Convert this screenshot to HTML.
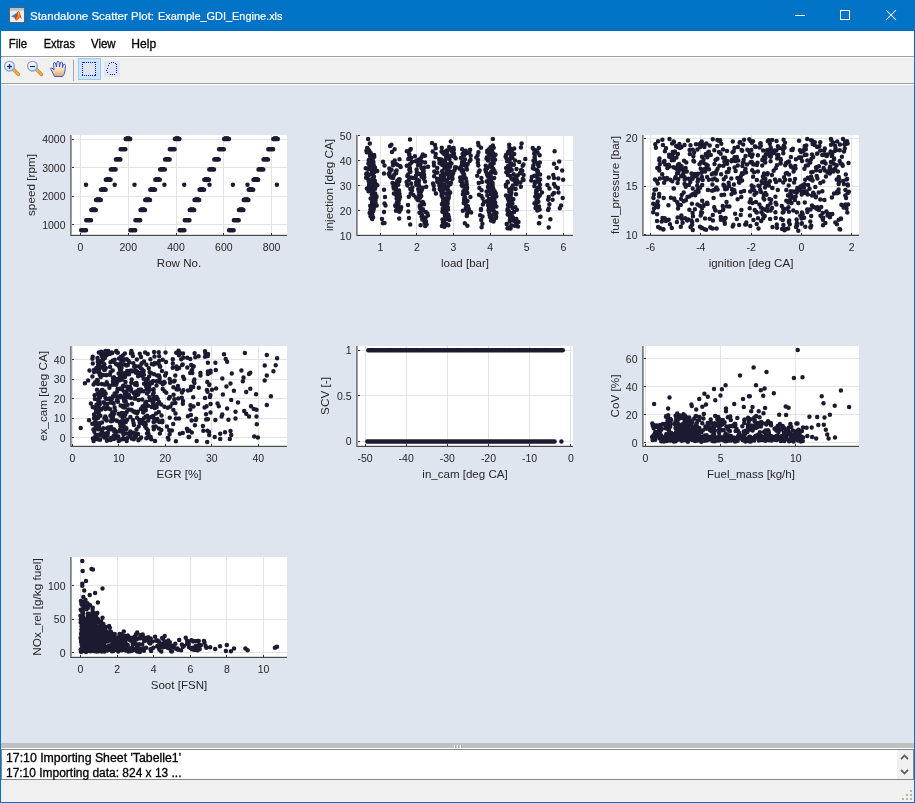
<!DOCTYPE html>
<html><head><meta charset="utf-8">
<style>
html,body{margin:0;padding:0;width:915px;height:803px;overflow:hidden;background:#0173c7;}
svg{position:absolute;left:0;top:0;will-change:transform;}
text{font-family:"Liberation Sans",sans-serif;}
</style></head><body>
<svg width="915" height="803" viewBox="0 0 915 803">
<defs>
<radialGradient id="lens" cx="0.4" cy="0.35" r="0.7"><stop offset="0" stop-color="#ffffff"/><stop offset="0.6" stop-color="#d8f2f6"/><stop offset="1" stop-color="#a8dde8"/></radialGradient>
<linearGradient id="skin" x1="0" y1="0" x2="0" y2="1"><stop offset="0" stop-color="#fdf0e2"/><stop offset="0.6" stop-color="#f6d9bb"/><stop offset="1" stop-color="#d9a070"/></linearGradient>
</defs>
<!-- window frame -->
<rect x="0" y="0" width="915" height="803" fill="#0173c7"/>
<!-- title icon -->
<rect x="9.5" y="7.5" width="15" height="15" fill="#eeeeee" stroke="#56606c"/>
<rect x="10" y="8" width="14" height="1.6" fill="#a9c8e6"/>
<rect x="10" y="9.6" width="14" height="0.8" fill="#9aa4ae"/>
<path d="M11.1 16.4 L17.1 12.6 L15.3 18.1 Z" fill="#3584c8"/>
<path d="M14.6 17.9 L17.2 12.5 L18.3 10.8 L19.5 12.2 L21.9 18.9 L20 16.9 L16.3 20.7 Z" fill="#c43617"/>
<path d="M15.8 19.6 L17.9 13.2 L18.6 11.6 L19.6 14.2 L20.3 16.9 L16.3 20.7 Z" fill="#ef7d21"/>
<path d="M18.1 12.6 L18.6 11.4 L19.3 13.6 L18.7 16.2 Z" fill="#f8d13a"/>
<text x="30" y="20" font-size="11.5" fill="#fff" stroke="#fff" stroke-width="0.2">Standalone Scatter Plot: </text>
<text x="158" y="20" font-size="11.5" fill="#fff" stroke="#fff" stroke-width="0.2" textLength="124.5" lengthAdjust="spacingAndGlyphs">Example_GDI_Engine.xls</text>
<path d="M795 15.5H805" stroke="#fff" stroke-width="1"/>
<rect x="840.5" y="10.5" width="9" height="9" fill="none" stroke="#fff" stroke-width="1"/>
<path d="M886 10L896 20M896 10L886 20" stroke="#fff" stroke-width="1.05"/>
<!-- menu -->
<rect x="1" y="31" width="913" height="25" fill="#fff"/>
<text x="8.7" y="47.6" font-size="12" fill="#000" stroke="#000" stroke-width="0.3" textLength="18.4" lengthAdjust="spacingAndGlyphs">File</text>
<text x="43.7" y="47.6" font-size="12" fill="#000" stroke="#000" stroke-width="0.3" textLength="31.2" lengthAdjust="spacingAndGlyphs">Extras</text>
<text x="90.9" y="47.6" font-size="12" fill="#000" stroke="#000" stroke-width="0.3" textLength="24.8" lengthAdjust="spacingAndGlyphs">View</text>
<text x="131.3" y="47.6" font-size="12" fill="#000" stroke="#000" stroke-width="0.3" textLength="24.9" lengthAdjust="spacingAndGlyphs">Help</text>
<rect x="1" y="56" width="913" height="1" fill="#a0a0a0"/>
<rect x="1" y="57" width="913" height="1" fill="#fff"/>
<rect x="1" y="58" width="913" height="25" fill="#f0f0f0"/>
<rect x="1" y="83" width="913" height="1" fill="#a0a0a0"/>
<rect x="1" y="84" width="913" height="1" fill="#fff"/>
<!-- toolbar icons -->
<g>
<path d="M13.5 69.5L18.5 74.5" stroke="#c08030" stroke-width="3.2" stroke-linecap="round"/>
<path d="M13.5 69.5L18.5 74.5" stroke="#f5ae45" stroke-width="2" stroke-linecap="round"/>
<circle cx="9.5" cy="66.2" r="4.9" fill="url(#lens)" stroke="#8a8ee0" stroke-width="1.1"/>
<path d="M7 66.5H12M9.5 64V69" stroke="#24336e" stroke-width="1.3"/>
<path d="M36.5 69.5L41.5 74.5" stroke="#c08030" stroke-width="3.2" stroke-linecap="round"/>
<path d="M36.5 69.5L41.5 74.5" stroke="#f5ae45" stroke-width="2" stroke-linecap="round"/>
<circle cx="32.5" cy="66.2" r="4.9" fill="url(#lens)" stroke="#8a8ee0" stroke-width="1.1"/>
<path d="M30 66.5H35" stroke="#24336e" stroke-width="1.3"/>
<path d="M54.5 76.5 L51 69.5 Q50 67.5 52 68 L54 70 L53.5 63.5 Q54 61.5 55.5 63 L56.5 67 L57 62 Q58 60.5 59.2 62 L59.5 67 L60.5 62.5 Q61.5 61 62.5 63 L62.5 67.5 L63.5 64.5 Q65 63.5 65.5 65.5 L65 71 Q64.5 74.5 62.5 76.5 Z" fill="url(#skin)" stroke="#2e4fc4" stroke-width="0.9"/>
<rect x="73" y="60" width="1" height="21" fill="#a7a7a7"/>
<rect x="78.5" y="58.5" width="22" height="21" fill="#cce4f7" stroke="#99c9ef"/>
<rect x="83" y="63" width="12" height="12" fill="#dde5f0"/>
<path d="M82 62h1v1h-1zM82 75h1v1h-1zM84 62h1v1h-1zM84 75h1v1h-1zM86 62h1v1h-1zM86 75h1v1h-1zM88 62h1v1h-1zM88 75h1v1h-1zM90 62h1v1h-1zM90 75h1v1h-1zM92 62h1v1h-1zM92 75h1v1h-1zM94 62h1v1h-1zM94 75h1v1h-1zM82 62h1v1h-1zM95 62h1v1h-1zM82 64h1v1h-1zM95 64h1v1h-1zM82 66h1v1h-1zM95 66h1v1h-1zM82 68h1v1h-1zM95 68h1v1h-1zM82 70h1v1h-1zM95 70h1v1h-1zM82 72h1v1h-1zM95 72h1v1h-1zM82 74h1v1h-1zM95 74h1v1h-1zM95 62h1v1h-1zM82 75h1v1h-1zM95 75h1v1h-1zM83 62h1v1h-1zM94 75h1v1h-1z" fill="#0a14f0"/>
<rect x="104" y="61" width="16" height="16" fill="#e0e5ee"/>
<ellipse cx="111.5" cy="68.5" rx="4.5" ry="5.5" fill="#dde5f0"/><path d="M107 68h1v1h-1zM108 65h1v1h-1zM109 63h1v1h-1zM111 62h1v1h-1zM113 62h1v1h-1zM115 63h1v1h-1zM116 64h1v1h-1zM116 66h1v1h-1zM116 68h1v1h-1zM116 70h1v1h-1zM116 72h1v1h-1zM114 74h1v1h-1zM112 74h1v1h-1zM110 74h1v1h-1zM107 72h1v1h-1zM106 70h1v1h-1z" fill="#0a14f0"/>
</g>
<!-- figure -->
<rect x="1" y="85" width="913" height="658" fill="#dfe5ef"/>
<rect x="72" y="135" width="215" height="100" fill="#fff"/>
<path d="M80.5 135V235M128.5 135V235M176.5 135V235M223.5 135V235M271.5 135V235M72 224.5H287M72 196.5H287M72 167.5H287M72 139.5H287" stroke="#e3e3e3" stroke-width="1" fill="none"/>
<path d="M81.2 230.3h0M81.5 230.3h0M81.7 230.3h0M81.9 230.3h0M82.2 230.3h0M82.4 230.3h0M82.7 230.3h0M82.9 230.3h0M83.1 230.3h0M83.4 230.3h0M83.6 230.3h0M83.8 230.3h0M84.1 230.3h0M84.3 230.3h0M84.6 230.3h0M84.8 230.3h0M85.0 230.3h0M85.3 230.3h0M85.5 230.3h0M85.8 230.3h0M86.0 230.3h0M86.2 220.2h0M86.5 220.2h0M86.7 220.2h0M87.0 220.2h0M87.2 220.2h0M87.4 220.2h0M87.7 220.2h0M87.9 220.2h0M88.1 220.2h0M88.4 220.2h0M88.6 220.2h0M88.9 220.2h0M89.1 220.2h0M89.3 220.2h0M89.6 220.2h0M89.8 220.2h0M90.1 220.2h0M90.3 220.2h0M90.5 220.2h0M90.8 220.2h0M91.0 220.2h0M91.3 210.0h0M91.5 210.0h0M91.7 210.0h0M92.0 210.0h0M92.2 210.0h0M92.4 210.0h0M92.7 210.0h0M92.9 210.0h0M93.2 210.0h0M93.4 210.0h0M93.6 210.0h0M93.9 210.0h0M94.1 210.0h0M94.4 210.0h0M94.6 210.0h0M94.8 210.0h0M95.1 210.0h0M95.3 210.0h0M95.6 210.0h0M95.8 210.0h0M96.0 199.9h0M96.3 199.9h0M96.5 199.9h0M96.7 199.9h0M97.0 199.9h0M97.2 199.9h0M97.5 199.9h0M97.7 199.9h0M97.9 199.9h0M98.2 199.9h0M98.4 199.9h0M98.7 199.9h0M98.9 199.9h0M99.1 199.9h0M99.4 199.9h0M99.6 199.9h0M99.9 199.9h0M100.1 199.9h0M100.3 199.9h0M100.6 199.9h0M100.8 199.9h0M101.0 189.8h0M101.3 189.8h0M101.5 189.8h0M101.8 189.8h0M102.0 189.8h0M102.2 189.8h0M102.5 189.8h0M102.7 189.8h0M103.0 189.8h0M103.2 189.8h0M103.4 189.8h0M103.7 189.8h0M103.9 189.8h0M104.2 189.8h0M104.4 189.8h0M104.6 189.8h0M104.9 189.8h0M105.1 189.8h0M105.3 189.8h0M105.6 189.8h0M105.8 179.7h0M106.1 179.7h0M106.3 179.7h0M106.5 179.7h0M106.8 179.7h0M107.0 179.7h0M107.3 179.7h0M107.5 179.7h0M107.7 179.7h0M108.0 179.7h0M108.2 179.7h0M108.5 179.7h0M108.7 179.7h0M108.9 179.7h0M109.2 179.7h0M109.4 179.7h0M109.6 179.7h0M109.9 179.7h0M110.1 179.7h0M110.4 179.7h0M110.6 179.7h0M110.8 169.5h0M111.1 169.5h0M111.3 169.5h0M111.6 169.5h0M111.8 169.5h0M112.0 169.5h0M112.3 169.5h0M112.5 169.5h0M112.8 169.5h0M113.0 169.5h0M113.2 169.5h0M113.5 169.5h0M113.7 169.5h0M113.9 169.5h0M114.2 169.5h0M114.4 169.5h0M114.7 169.5h0M114.9 169.5h0M115.1 169.5h0M115.4 169.5h0M115.6 169.5h0M115.9 159.4h0M116.1 159.4h0M116.3 159.4h0M116.6 159.4h0M116.8 159.4h0M117.1 159.4h0M117.3 159.4h0M117.5 159.4h0M117.8 159.4h0M118.0 159.4h0M118.2 159.4h0M118.5 159.4h0M118.7 159.4h0M119.0 159.4h0M119.2 159.4h0M119.4 159.4h0M119.7 159.4h0M119.9 159.4h0M120.2 159.4h0M120.4 159.4h0M120.6 149.3h0M120.9 149.3h0M121.1 149.3h0M121.4 149.3h0M121.6 149.3h0M121.8 149.3h0M122.1 149.3h0M122.3 149.3h0M122.5 149.3h0M122.8 149.3h0M123.0 149.3h0M123.3 149.3h0M123.5 149.3h0M123.7 149.3h0M124.0 149.3h0M124.2 149.3h0M124.5 149.3h0M124.7 149.3h0M124.9 149.3h0M125.2 149.3h0M125.4 149.3h0M125.7 139.1h0M125.9 139.1h0M126.1 139.1h0M126.4 139.1h0M126.6 139.1h0M126.8 139.1h0M127.1 139.1h0M127.3 139.1h0M127.6 139.1h0M127.8 139.1h0M128.0 139.1h0M128.3 139.1h0M128.5 139.1h0M128.8 139.1h0M129.0 139.1h0M129.2 139.1h0M129.5 139.1h0M129.7 139.1h0M130.0 139.1h0M130.2 139.1h0M130.4 230.3h0M130.7 230.3h0M130.9 230.3h0M131.1 230.3h0M131.4 230.3h0M131.6 230.3h0M131.9 230.3h0M132.1 230.3h0M132.3 230.3h0M132.6 230.3h0M132.8 230.3h0M133.1 230.3h0M133.3 230.3h0M133.5 230.3h0M133.8 230.3h0M134.0 230.3h0M134.3 230.3h0M134.5 230.3h0M134.7 230.3h0M135.0 230.3h0M135.2 230.3h0M135.4 220.2h0M135.7 220.2h0M135.9 220.2h0M136.2 220.2h0M136.4 220.2h0M136.6 220.2h0M136.9 220.2h0M137.1 220.2h0M137.4 220.2h0M137.6 220.2h0M137.8 220.2h0M138.1 220.2h0M138.3 220.2h0M138.6 220.2h0M138.8 220.2h0M139.0 220.2h0M139.3 220.2h0M139.5 220.2h0M139.7 220.2h0M140.0 220.2h0M140.2 220.2h0M140.5 210.0h0M140.7 210.0h0M140.9 210.0h0M141.2 210.0h0M141.4 210.0h0M141.7 210.0h0M141.9 210.0h0M142.1 210.0h0M142.4 210.0h0M142.6 210.0h0M142.9 210.0h0M143.1 210.0h0M143.3 210.0h0M143.6 210.0h0M143.8 210.0h0M144.0 210.0h0M144.3 210.0h0M144.5 210.0h0M144.8 210.0h0M145.0 210.0h0M145.2 199.9h0M145.5 199.9h0M145.7 199.9h0M146.0 199.9h0M146.2 199.9h0M146.4 199.9h0M146.7 199.9h0M146.9 199.9h0M147.2 199.9h0M147.4 199.9h0M147.6 199.9h0M147.9 199.9h0M148.1 199.9h0M148.3 199.9h0M148.6 199.9h0M148.8 199.9h0M149.1 199.9h0M149.3 199.9h0M149.5 199.9h0M149.8 199.9h0M150.0 199.9h0M150.3 189.8h0M150.5 189.8h0M150.7 189.8h0M151.0 189.8h0M151.2 189.8h0M151.5 189.8h0M151.7 189.8h0M151.9 189.8h0M152.2 189.8h0M152.4 189.8h0M152.6 189.8h0M152.9 189.8h0M153.1 189.8h0M153.4 189.8h0M153.6 189.8h0M153.8 189.8h0M154.1 189.8h0M154.3 189.8h0M154.6 189.8h0M154.8 189.8h0M155.0 189.8h0M155.3 179.7h0M155.5 179.7h0M155.8 179.7h0M156.0 179.7h0M156.2 179.7h0M156.5 179.7h0M156.7 179.7h0M156.9 179.7h0M157.2 179.7h0M157.4 179.7h0M157.7 179.7h0M157.9 179.7h0M158.1 179.7h0M158.4 179.7h0M158.6 179.7h0M158.9 179.7h0M159.1 179.7h0M159.3 179.7h0M159.6 179.7h0M159.8 179.7h0M160.1 169.5h0M160.3 169.5h0M160.5 169.5h0M160.8 169.5h0M161.0 169.5h0M161.2 169.5h0M161.5 169.5h0M161.7 169.5h0M162.0 169.5h0M162.2 169.5h0M162.4 169.5h0M162.7 169.5h0M162.9 169.5h0M163.2 169.5h0M163.4 169.5h0M163.6 169.5h0M163.9 169.5h0M164.1 169.5h0M164.4 169.5h0M164.6 169.5h0M164.8 169.5h0M165.1 159.4h0M165.3 159.4h0M165.5 159.4h0M165.8 159.4h0M166.0 159.4h0M166.3 159.4h0M166.5 159.4h0M166.7 159.4h0M167.0 159.4h0M167.2 159.4h0M167.5 159.4h0M167.7 159.4h0M167.9 159.4h0M168.2 159.4h0M168.4 159.4h0M168.7 159.4h0M168.9 159.4h0M169.1 159.4h0M169.4 159.4h0M169.6 159.4h0M169.8 149.3h0M170.1 149.3h0M170.3 149.3h0M170.6 149.3h0M170.8 149.3h0M171.0 149.3h0M171.3 149.3h0M171.5 149.3h0M171.8 149.3h0M172.0 149.3h0M172.2 149.3h0M172.5 149.3h0M172.7 149.3h0M173.0 149.3h0M173.2 149.3h0M173.4 149.3h0M173.7 149.3h0M173.9 149.3h0M174.1 149.3h0M174.4 149.3h0M174.6 149.3h0M174.9 139.1h0M175.1 139.1h0M175.3 139.1h0M175.6 139.1h0M175.8 139.1h0M176.1 139.1h0M176.3 139.1h0M176.5 139.1h0M176.8 139.1h0M177.0 139.1h0M177.3 139.1h0M177.5 139.1h0M177.7 139.1h0M178.0 139.1h0M178.2 139.1h0M178.4 139.1h0M178.7 139.1h0M178.9 139.1h0M179.2 139.1h0M179.4 139.1h0M179.6 230.3h0M179.9 230.3h0M180.1 230.3h0M180.4 230.3h0M180.6 230.3h0M180.8 230.3h0M181.1 230.3h0M181.3 230.3h0M181.6 230.3h0M181.8 230.3h0M182.0 230.3h0M182.3 230.3h0M182.5 230.3h0M182.7 230.3h0M183.0 230.3h0M183.2 230.3h0M183.5 230.3h0M183.7 230.3h0M183.9 230.3h0M184.2 230.3h0M184.4 230.3h0M184.7 220.2h0M184.9 220.2h0M185.1 220.2h0M185.4 220.2h0M185.6 220.2h0M185.9 220.2h0M186.1 220.2h0M186.3 220.2h0M186.6 220.2h0M186.8 220.2h0M187.0 220.2h0M187.3 220.2h0M187.5 220.2h0M187.8 220.2h0M188.0 220.2h0M188.2 220.2h0M188.5 220.2h0M188.7 220.2h0M189.0 220.2h0M189.2 220.2h0M189.4 220.2h0M189.7 210.0h0M189.9 210.0h0M190.2 210.0h0M190.4 210.0h0M190.6 210.0h0M190.9 210.0h0M191.1 210.0h0M191.3 210.0h0M191.6 210.0h0M191.8 210.0h0M192.1 210.0h0M192.3 210.0h0M192.5 210.0h0M192.8 210.0h0M193.0 210.0h0M193.3 210.0h0M193.5 210.0h0M193.7 210.0h0M194.0 210.0h0M194.2 210.0h0M194.5 199.9h0M194.7 199.9h0M194.9 199.9h0M195.2 199.9h0M195.4 199.9h0M195.6 199.9h0M195.9 199.9h0M196.1 199.9h0M196.4 199.9h0M196.6 199.9h0M196.8 199.9h0M197.1 199.9h0M197.3 199.9h0M197.6 199.9h0M197.8 199.9h0M198.0 199.9h0M198.3 199.9h0M198.5 199.9h0M198.8 199.9h0M199.0 199.9h0M199.2 199.9h0M199.5 189.8h0M199.7 189.8h0M199.9 189.8h0M200.2 189.8h0M200.4 189.8h0M200.7 189.8h0M200.9 189.8h0M201.1 189.8h0M201.4 189.8h0M201.6 189.8h0M201.9 189.8h0M202.1 189.8h0M202.3 189.8h0M202.6 189.8h0M202.8 189.8h0M203.1 189.8h0M203.3 189.8h0M203.5 189.8h0M203.8 189.8h0M204.0 189.8h0M204.3 179.7h0M204.5 179.7h0M204.7 179.7h0M205.0 179.7h0M205.2 179.7h0M205.4 179.7h0M205.7 179.7h0M205.9 179.7h0M206.2 179.7h0M206.4 179.7h0M206.6 179.7h0M206.9 179.7h0M207.1 179.7h0M207.4 179.7h0M207.6 179.7h0M207.8 179.7h0M208.1 179.7h0M208.3 179.7h0M208.6 179.7h0M208.8 179.7h0M209.0 179.7h0M209.3 169.5h0M209.5 169.5h0M209.7 169.5h0M210.0 169.5h0M210.2 169.5h0M210.5 169.5h0M210.7 169.5h0M210.9 169.5h0M211.2 169.5h0M211.4 169.5h0M211.7 169.5h0M211.9 169.5h0M212.1 169.5h0M212.4 169.5h0M212.6 169.5h0M212.9 169.5h0M213.1 169.5h0M213.3 169.5h0M213.6 169.5h0M213.8 169.5h0M214.0 169.5h0M214.3 159.4h0M214.5 159.4h0M214.8 159.4h0M215.0 159.4h0M215.2 159.4h0M215.5 159.4h0M215.7 159.4h0M216.0 159.4h0M216.2 159.4h0M216.4 159.4h0M216.7 159.4h0M216.9 159.4h0M217.2 159.4h0M217.4 159.4h0M217.6 159.4h0M217.9 159.4h0M218.1 159.4h0M218.3 159.4h0M218.6 159.4h0M218.8 159.4h0M219.1 149.3h0M219.3 149.3h0M219.5 149.3h0M219.8 149.3h0M220.0 149.3h0M220.3 149.3h0M220.5 149.3h0M220.7 149.3h0M221.0 149.3h0M221.2 149.3h0M221.5 149.3h0M221.7 149.3h0M221.9 149.3h0M222.2 149.3h0M222.4 149.3h0M222.6 149.3h0M222.9 149.3h0M223.1 149.3h0M223.4 149.3h0M223.6 149.3h0M223.8 149.3h0M224.1 139.1h0M224.3 139.1h0M224.6 139.1h0M224.8 139.1h0M225.0 139.1h0M225.3 139.1h0M225.5 139.1h0M225.8 139.1h0M226.0 139.1h0M226.2 139.1h0M226.5 139.1h0M226.7 139.1h0M226.9 139.1h0M227.2 139.1h0M227.4 139.1h0M227.7 139.1h0M227.9 139.1h0M228.1 139.1h0M228.4 139.1h0M228.6 139.1h0M228.9 139.1h0M229.1 230.3h0M229.3 230.3h0M229.6 230.3h0M229.8 230.3h0M230.1 230.3h0M230.3 230.3h0M230.5 230.3h0M230.8 230.3h0M231.0 230.3h0M231.2 230.3h0M231.5 230.3h0M231.7 230.3h0M232.0 230.3h0M232.2 230.3h0M232.4 230.3h0M232.7 230.3h0M232.9 230.3h0M233.2 230.3h0M233.4 230.3h0M233.6 230.3h0M233.9 220.2h0M234.1 220.2h0M234.4 220.2h0M234.6 220.2h0M234.8 220.2h0M235.1 220.2h0M235.3 220.2h0M235.5 220.2h0M235.8 220.2h0M236.0 220.2h0M236.3 220.2h0M236.5 220.2h0M236.7 220.2h0M237.0 220.2h0M237.2 220.2h0M237.5 220.2h0M237.7 220.2h0M237.9 220.2h0M238.2 220.2h0M238.4 220.2h0M238.7 220.2h0M238.9 210.0h0M239.1 210.0h0M239.4 210.0h0M239.6 210.0h0M239.8 210.0h0M240.1 210.0h0M240.3 210.0h0M240.6 210.0h0M240.8 210.0h0M241.0 210.0h0M241.3 210.0h0M241.5 210.0h0M241.8 210.0h0M242.0 210.0h0M242.2 210.0h0M242.5 210.0h0M242.7 210.0h0M243.0 210.0h0M243.2 210.0h0M243.4 210.0h0M243.7 199.9h0M243.9 199.9h0M244.1 199.9h0M244.4 199.9h0M244.6 199.9h0M244.9 199.9h0M245.1 199.9h0M245.3 199.9h0M245.6 199.9h0M245.8 199.9h0M246.1 199.9h0M246.3 199.9h0M246.5 199.9h0M246.8 199.9h0M247.0 199.9h0M247.3 199.9h0M247.5 199.9h0M247.7 199.9h0M248.0 199.9h0M248.2 199.9h0M248.4 199.9h0M248.7 189.8h0M248.9 189.8h0M249.2 189.8h0M249.4 189.8h0M249.6 189.8h0M249.9 189.8h0M250.1 189.8h0M250.4 189.8h0M250.6 189.8h0M250.8 189.8h0M251.1 189.8h0M251.3 189.8h0M251.6 189.8h0M251.8 189.8h0M252.0 189.8h0M252.3 189.8h0M252.5 189.8h0M252.7 189.8h0M253.0 189.8h0M253.2 189.8h0M253.5 179.7h0M253.7 179.7h0M253.9 179.7h0M254.2 179.7h0M254.4 179.7h0M254.7 179.7h0M254.9 179.7h0M255.1 179.7h0M255.4 179.7h0M255.6 179.7h0M255.9 179.7h0M256.1 179.7h0M256.3 179.7h0M256.6 179.7h0M256.8 179.7h0M257.0 179.7h0M257.3 179.7h0M257.5 179.7h0M257.8 179.7h0M258.0 179.7h0M258.2 179.7h0M258.5 169.5h0M258.7 169.5h0M259.0 169.5h0M259.2 169.5h0M259.4 169.5h0M259.7 169.5h0M259.9 169.5h0M260.2 169.5h0M260.4 169.5h0M260.6 169.5h0M260.9 169.5h0M261.1 169.5h0M261.3 169.5h0M261.6 169.5h0M261.8 169.5h0M262.1 169.5h0M262.3 169.5h0M262.5 169.5h0M262.8 169.5h0M263.0 169.5h0M263.3 169.5h0M263.5 159.4h0M263.7 159.4h0M264.0 159.4h0M264.2 159.4h0M264.5 159.4h0M264.7 159.4h0M264.9 159.4h0M265.2 159.4h0M265.4 159.4h0M265.6 159.4h0M265.9 159.4h0M266.1 159.4h0M266.4 159.4h0M266.6 159.4h0M266.8 159.4h0M267.1 159.4h0M267.3 159.4h0M267.6 159.4h0M267.8 159.4h0M268.0 159.4h0M268.3 149.3h0M268.5 149.3h0M268.8 149.3h0M269.0 149.3h0M269.2 149.3h0M269.5 149.3h0M269.7 149.3h0M269.9 149.3h0M270.2 149.3h0M270.4 149.3h0M270.7 149.3h0M270.9 149.3h0M271.1 149.3h0M271.4 149.3h0M271.6 149.3h0M271.9 149.3h0M272.1 149.3h0M272.3 149.3h0M272.6 149.3h0M272.8 149.3h0M273.1 149.3h0M273.3 139.1h0M273.5 139.1h0M273.8 139.1h0M274.0 139.1h0M274.2 139.1h0M274.5 139.1h0M274.7 139.1h0M275.0 139.1h0M275.2 139.1h0M275.4 139.1h0M275.7 139.1h0M275.9 139.1h0M276.2 139.1h0M276.4 139.1h0M276.6 139.1h0M276.9 139.1h0M277.1 139.1h0M277.4 139.1h0M277.6 139.1h0M277.8 139.1h0M86.0 184.7h0M114.7 184.7h0M134.5 184.7h0M164.4 184.7h0M184.2 184.7h0M209.5 184.7h0M232.9 184.7h0M247.5 184.7h0M276.9 184.7h0" stroke="#1a1a30" stroke-width="4.5" stroke-linecap="round" fill="none"/>
<rect x="70" y="135" width="1" height="101" fill="#777c82"/>
<rect x="71" y="135" width="1" height="100" fill="#a0a0a0"/>
<rect x="72" y="234" width="215" height="1" fill="#000" fill-opacity="0.15"/>
<rect x="71" y="235" width="216" height="1" fill="#4a4a4a"/>
<path d="M80.5 235v-2M128.5 235v-2M176.5 235v-2M223.5 235v-2M271.5 235v-2M72 224.5h2M72 196.5h2M72 167.5h2M72 139.5h2" stroke="#333" stroke-width="1" fill="none"/>
<text x="80.5" y="250.5" text-anchor="middle" font-size="10.5" fill="#262626">0</text>
<text x="128.28" y="250.5" text-anchor="middle" font-size="10.5" fill="#262626">200</text>
<text x="176.06" y="250.5" text-anchor="middle" font-size="10.5" fill="#262626">400</text>
<text x="223.84" y="250.5" text-anchor="middle" font-size="10.5" fill="#262626">600</text>
<text x="271.62" y="250.5" text-anchor="middle" font-size="10.5" fill="#262626">800</text>
<text x="65.5" y="228.6" text-anchor="end" font-size="10.5" fill="#262626">1000</text>
<text x="65.5" y="200.12" text-anchor="end" font-size="10.5" fill="#262626">2000</text>
<text x="65.5" y="171.64" text-anchor="end" font-size="10.5" fill="#262626">3000</text>
<text x="65.5" y="143.16" text-anchor="end" font-size="10.5" fill="#262626">4000</text>
<text x="179.0" y="266.5" text-anchor="middle" font-size="11.55" fill="#262626">Row No.</text>
<text transform="translate(35,185.0) rotate(-90)" text-anchor="middle" font-size="11.75" fill="#262626">speed [rpm]</text>
<rect x="358" y="135" width="215" height="100" fill="#fff"/>
<path d="M380.5 135V235M416.5 135V235M453.5 135V235M490.5 135V235M526.5 135V235M563.5 135V235M358 235.5H573M358 210.5H573M358 185.5H573M358 160.5H573M358 135.5H573" stroke="#e3e3e3" stroke-width="1" fill="none"/>
<path d="M370.0 212.6h0M368.7 160.3h0M373.8 208.8h0M373.1 217.2h0M371.8 218.4h0M372.9 179.1h0M371.3 215.5h0M374.0 194.0h0M371.0 163.0h0M371.5 216.9h0M372.2 178.8h0M370.6 214.0h0M372.8 155.6h0M371.9 211.5h0M371.5 187.1h0M369.1 184.1h0M369.8 164.5h0M374.9 167.6h0M372.4 169.5h0M372.2 214.4h0M372.2 219.0h0M370.1 156.1h0M371.5 170.0h0M371.4 192.1h0M372.1 215.3h0M373.2 207.4h0M377.3 185.2h0M372.5 208.6h0M374.3 156.7h0M375.1 188.8h0M376.5 196.3h0M366.4 150.8h0M370.5 216.2h0M374.8 180.7h0M374.0 206.7h0M369.1 185.8h0M375.2 193.5h0M370.7 167.4h0M373.5 198.0h0M370.2 205.8h0M372.7 174.4h0M372.9 158.4h0M376.4 184.5h0M369.4 159.7h0M369.5 166.2h0M373.7 197.3h0M369.5 161.7h0M369.5 152.1h0M370.0 160.9h0M366.9 188.4h0M368.0 189.4h0M372.7 204.8h0M372.3 203.3h0M366.2 174.0h0M373.7 165.0h0M370.7 166.0h0M377.2 171.1h0M373.3 210.9h0M373.5 195.5h0M370.2 153.5h0M374.9 187.7h0M371.7 172.5h0M376.5 197.1h0M372.9 202.6h0M367.8 149.0h0M370.6 198.6h0M375.2 183.2h0M367.6 177.3h0M372.5 210.4h0M367.2 148.1h0M373.9 176.5h0M374.1 155.1h0M373.1 194.8h0M367.1 173.2h0M369.5 151.6h0M373.7 186.3h0M371.2 190.3h0M368.4 163.6h0M375.6 200.0h0M373.3 192.4h0M370.7 153.0h0M370.5 209.5h0M372.8 157.7h0M372.6 199.2h0M368.6 181.1h0M368.5 191.3h0M370.0 154.6h0M369.1 150.4h0M374.0 201.1h0M370.9 159.1h0M372.0 204.1h0M373.4 162.1h0M368.2 169.1h0M369.6 213.1h0M376.7 205.4h0M371.4 207.7h0M368.0 149.6h0M370.2 211.9h0M372.1 201.9h0M370.4 157.3h0M371.8 194.4h0M372.6 200.5h0M373.2 175.5h0M374.0 176.7h0M369.0 175.1h0M366.1 177.7h0M374.5 172.1h0M371.4 182.6h0M371.4 164.2h0M368.5 179.7h0M375.6 202.7h0M365.7 168.3h0M376.1 170.7h0M366.8 152.3h0M372.5 181.9h0M369.6 183.0h0M368.7 190.7h0M368.1 138.9h0M369.8 143.5h0M383.0 161.8h0M384.5 165.5h0M384.0 173.5h0M384.0 189.8h0M385.0 197.0h0M384.5 203.6h0M385.5 205.5h0M384.0 212.0h0M382.0 219.0h0M384.5 223.0h0M383.0 223.2h0M394.4 174.6h0M397.3 192.6h0M395.9 163.9h0M393.8 162.1h0M399.0 191.8h0M392.7 162.5h0M398.2 197.7h0M397.9 204.5h0M394.9 185.8h0M398.2 184.7h0M399.0 190.4h0M389.6 172.6h0M393.0 165.3h0M399.6 179.3h0M398.0 209.1h0M399.3 199.2h0M396.2 172.9h0M397.4 208.2h0M398.4 196.0h0M395.5 206.2h0M401.2 207.3h0M399.4 211.7h0M393.5 176.0h0M398.6 179.6h0M389.3 168.4h0M400.7 209.5h0M397.2 201.9h0M396.0 187.3h0M393.8 188.6h0M391.5 169.7h0M395.5 183.7h0M396.6 198.6h0M397.2 181.1h0M390.3 169.2h0M399.5 159.2h0M388.8 174.0h0M389.7 176.1h0M400.7 167.0h0M400.0 197.0h0M398.5 201.7h0M393.9 193.6h0M395.4 184.2h0M391.0 177.5h0M396.2 190.9h0M396.1 189.3h0M398.4 200.2h0M399.5 194.1h0M396.1 195.1h0M396.6 170.6h0M399.9 166.0h0M396.0 210.8h0M393.1 178.1h0M397.3 164.8h0M399.3 181.2h0M394.6 161.1h0M398.6 203.5h0M395.2 205.4h0M396.7 203.1h0M394.7 160.6h0M392.5 182.9h0M395.8 171.6h0M393.4 186.6h0M391.4 144.8h0M390.1 146.1h0M394.6 149.3h0M392.0 152.0h0M399.2 218.6h0M407.2 184.5h0M409.8 164.3h0M410.8 149.0h0M412.3 187.5h0M408.8 196.7h0M409.3 169.8h0M410.3 189.1h0M413.4 195.1h0M411.4 193.4h0M411.2 157.9h0M406.8 151.2h0M411.6 162.6h0M412.0 190.4h0M411.9 161.7h0M410.0 168.3h0M410.7 193.2h0M409.2 155.1h0M410.0 170.9h0M410.0 150.0h0M406.6 182.0h0M408.0 174.5h0M407.3 175.9h0M413.3 178.0h0M411.1 183.4h0M411.0 177.6h0M409.3 154.0h0M410.4 171.8h0M408.3 159.1h0M406.8 165.8h0M408.9 179.8h0M409.6 156.1h0M407.5 185.6h0M410.0 139.5h0M408.3 211.4h0M409.0 218.0h0M410.2 224.5h0M408.0 205.0h0M421.6 157.0h0M422.9 209.3h0M421.9 161.8h0M421.9 189.7h0M424.8 217.8h0M422.8 169.8h0M416.8 171.9h0M419.2 190.7h0M425.4 220.6h0M417.0 179.6h0M420.6 158.4h0M428.0 166.7h0M427.9 215.4h0M422.3 219.4h0M422.8 202.0h0M419.0 180.7h0M421.6 176.7h0M425.1 162.6h0M420.6 206.3h0M422.1 214.9h0M421.7 203.1h0M422.7 154.5h0M420.2 208.3h0M416.4 184.3h0M417.4 199.7h0M424.6 222.7h0M419.8 205.4h0M417.1 160.4h0M415.8 197.4h0M426.6 224.4h0M420.6 225.3h0M419.5 212.8h0M426.0 221.6h0M418.7 182.7h0M425.2 226.1h0M425.8 212.1h0M420.1 197.8h0M425.9 223.6h0M418.0 165.3h0M421.6 209.9h0M420.9 192.1h0M421.5 216.5h0M423.2 202.8h0M415.6 161.2h0M418.6 163.8h0M422.9 172.8h0M424.3 177.3h0M424.1 174.7h0M425.0 181.5h0M420.5 192.9h0M419.7 206.8h0M421.2 195.9h0M422.2 210.8h0M423.7 178.8h0M414.9 156.2h0M418.6 200.2h0M423.7 171.2h0M422.7 187.8h0M419.1 185.8h0M427.4 213.5h0M416.1 184.7h0M421.5 168.0h0M419.1 194.6h0M425.4 217.7h0M418.6 198.5h0M424.4 167.5h0M418.9 191.5h0M416.1 175.6h0M420.5 164.2h0M425.0 155.7h0M423.6 220.1h0M420.4 195.5h0M416.1 182.3h0M424.0 204.2h0M426.2 186.7h0M418.2 188.9h0M419.0 159.5h0M419.6 174.0h0M416.6 169.6h0M435.9 172.6h0M437.1 178.8h0M435.7 148.3h0M433.8 162.7h0M434.1 189.6h0M432.0 143.0h0M435.9 193.6h0M432.7 151.4h0M435.7 154.0h0M434.0 165.6h0M433.0 183.4h0M433.7 185.8h0M437.3 167.9h0M435.0 144.9h0M434.1 176.2h0M435.5 157.0h0M434.3 171.5h0M450.5 162.9h0M444.8 214.1h0M444.2 212.4h0M439.5 161.1h0M444.8 209.1h0M442.9 222.6h0M444.6 202.7h0M447.9 186.4h0M453.3 173.1h0M443.4 221.4h0M448.2 214.8h0M451.4 155.5h0M450.4 184.3h0M441.9 190.8h0M448.0 209.4h0M447.2 153.1h0M444.5 207.6h0M448.7 170.2h0M440.6 179.1h0M443.5 179.5h0M456.6 167.6h0M447.1 205.2h0M446.6 213.2h0M447.3 206.9h0M444.3 210.2h0M441.9 189.7h0M437.4 172.5h0M454.6 157.1h0M444.1 177.1h0M447.4 165.5h0M448.7 196.4h0M444.7 151.7h0M445.2 218.7h0M447.9 164.3h0M452.5 155.8h0M448.3 225.2h0M441.6 181.4h0M446.3 206.2h0M448.6 182.9h0M442.5 219.5h0M443.1 180.1h0M443.4 223.1h0M442.6 197.4h0M443.3 178.3h0M445.4 188.6h0M442.1 171.2h0M446.8 166.5h0M447.7 215.6h0M441.3 159.5h0M454.3 156.8h0M444.2 220.6h0M452.2 172.0h0M439.3 185.2h0M440.5 183.9h0M450.2 192.5h0M448.9 194.6h0M446.2 154.7h0M444.7 199.9h0M447.5 150.2h0M449.1 174.4h0M445.2 160.3h0M442.7 208.7h0M444.7 202.1h0M449.0 164.6h0M446.2 219.1h0M447.0 180.9h0M441.5 151.5h0M442.9 187.1h0M455.7 158.3h0M442.1 175.1h0M447.9 174.5h0M446.2 157.5h0M449.9 149.3h0M440.9 175.8h0M445.8 193.4h0M444.5 209.8h0M443.1 201.0h0M443.5 189.2h0M444.5 203.1h0M452.4 175.5h0M444.5 168.4h0M442.0 203.9h0M441.0 191.1h0M444.8 212.6h0M443.5 223.3h0M445.0 152.3h0M448.4 217.4h0M447.7 168.9h0M446.7 169.1h0M445.9 208.0h0M441.6 195.4h0M441.8 147.8h0M439.5 163.2h0M447.8 199.2h0M450.0 166.8h0M446.2 165.9h0M447.8 172.7h0M449.2 147.1h0M443.0 226.3h0M453.6 148.1h0M446.1 211.1h0M446.5 224.0h0M442.4 196.8h0M442.2 164.9h0M446.7 216.6h0M444.3 210.9h0M448.7 197.9h0M447.3 198.6h0M444.6 213.6h0M444.3 154.2h0M447.8 207.2h0M447.7 203.6h0M446.9 150.4h0M443.0 221.6h0M445.1 161.3h0M439.1 158.9h0M442.4 191.6h0M447.3 204.7h0M446.2 201.7h0M452.5 178.8h0M441.0 187.3h0M441.7 193.1h0M448.7 192.1h0M441.0 159.9h0M442.4 186.1h0M441.8 193.7h0M439.7 188.9h0M448.1 169.5h0M452.4 148.5h0M451.4 163.6h0M453.8 149.7h0M444.4 184.6h0M444.5 162.0h0M455.1 167.3h0M446.5 180.6h0M447.3 156.4h0M447.3 197.2h0M445.6 224.7h0M448.8 217.1h0M454.0 153.6h0M445.0 199.1h0M443.9 222.2h0M443.9 173.6h0M449.4 220.0h0M437.2 181.8h0M448.8 178.0h0M448.3 190.3h0M444.4 226.7h0M445.5 187.9h0M442.1 204.5h0M445.3 214.5h0M445.1 216.2h0M441.9 226.1h0M448.1 225.1h0M449.1 176.3h0M442.4 211.8h0M444.9 215.7h0M440.6 162.4h0M447.8 194.2h0M441.2 185.8h0M442.7 152.7h0M449.5 159.3h0M451.3 177.5h0M447.1 171.4h0M450.9 182.5h0M447.7 200.8h0M451.9 151.0h0M445.0 200.2h0M449.3 183.4h0M454.5 170.3h0M444.0 220.5h0M447.2 154.8h0M445.5 218.2h0M441.7 195.5h0M444.0 205.7h0M450.8 141.5h0M460.9 167.0h0M463.6 192.3h0M462.9 194.3h0M463.0 186.6h0M459.8 168.7h0M467.9 206.2h0M464.2 199.3h0M465.1 203.8h0M467.5 201.1h0M464.4 195.7h0M465.8 204.6h0M463.2 172.9h0M467.4 193.0h0M466.4 181.4h0M464.2 200.4h0M470.5 159.7h0M464.3 155.1h0M464.1 174.8h0M464.8 165.4h0M462.5 183.7h0M462.1 161.9h0M462.6 154.1h0M461.9 164.3h0M463.7 202.9h0M464.2 198.4h0M466.5 166.8h0M467.1 213.7h0M465.8 178.6h0M466.7 184.2h0M462.9 210.8h0M461.9 180.1h0M462.5 172.2h0M468.8 208.9h0M467.7 164.1h0M470.1 212.1h0M466.5 187.8h0M460.4 181.0h0M465.2 197.7h0M463.8 174.1h0M464.9 159.2h0M471.2 212.5h0M461.7 185.6h0M467.1 187.4h0M461.9 182.3h0M465.7 150.7h0M461.6 170.8h0M466.8 153.1h0M464.1 162.6h0M465.5 189.5h0M467.0 210.2h0M470.7 155.8h0M463.4 175.7h0M463.5 194.2h0M460.9 158.0h0M463.3 191.2h0M464.3 176.5h0M464.2 151.6h0M462.6 156.9h0M467.6 207.2h0M460.2 177.5h0M465.8 208.3h0M470.4 196.9h0M465.1 202.0h0M469.3 152.4h0M470.1 149.8h0M466.9 189.1h0M466.9 169.5h0M469.6 161.1h0M463.2 170.2h0M462.2 149.3h0M466.8 216.0h0M464.8 223.2h0M467.4 225.8h0M478.7 183.0h0M479.4 187.9h0M477.8 162.7h0M484.1 202.0h0M481.0 147.7h0M482.5 216.4h0M478.3 165.6h0M481.6 227.3h0M481.4 195.9h0M481.2 220.1h0M481.0 209.0h0M477.6 155.2h0M476.3 157.5h0M479.0 194.8h0M481.4 178.0h0M477.9 159.7h0M482.4 223.8h0M482.0 182.1h0M480.1 215.2h0M478.1 143.1h0M478.8 172.1h0M478.5 145.2h0M482.7 198.5h0M478.4 152.3h0M477.2 175.8h0M481.6 190.3h0M482.9 204.6h0M479.6 170.4h0M481.0 210.0h0M493.2 220.2h0M490.0 217.1h0M489.6 188.7h0M495.2 202.8h0M491.3 179.4h0M486.6 191.5h0M493.4 168.9h0M487.2 150.7h0M492.2 167.9h0M494.2 178.0h0M489.9 181.0h0M492.9 187.6h0M493.7 163.3h0M488.9 182.4h0M493.4 206.9h0M491.3 217.4h0M488.0 160.6h0M494.3 196.5h0M490.8 177.4h0M490.6 147.3h0M487.9 187.1h0M494.3 200.2h0M488.8 184.3h0M493.3 209.6h0M493.3 204.0h0M490.6 175.5h0M489.0 185.2h0M489.3 173.8h0M491.0 194.1h0M494.4 170.9h0M492.0 192.2h0M495.8 193.3h0M489.3 155.5h0M492.9 155.9h0M491.2 178.7h0M491.3 149.8h0M492.0 154.4h0M486.7 201.3h0M494.7 191.3h0M492.7 162.4h0M492.6 183.0h0M489.4 208.2h0M486.5 158.5h0M488.5 210.2h0M485.4 169.8h0M496.2 216.7h0M494.4 218.8h0M492.6 184.7h0M492.7 170.3h0M494.5 198.5h0M487.2 175.0h0M490.4 189.4h0M487.3 168.3h0M487.5 175.8h0M494.0 214.3h0M489.6 207.7h0M491.0 220.6h0M493.7 220.9h0M490.7 186.6h0M492.1 202.5h0M488.7 190.9h0M493.9 201.6h0M487.3 195.4h0M494.1 211.6h0M487.3 152.4h0M493.5 221.4h0M493.8 156.8h0M496.4 196.2h0M493.1 153.4h0M492.2 163.8h0M488.9 185.8h0M495.5 154.7h0M492.4 197.6h0M486.8 157.6h0M490.3 214.9h0M490.6 166.4h0M492.7 206.0h0M493.3 188.5h0M493.7 147.7h0M496.4 206.4h0M487.8 167.2h0M488.7 203.8h0M486.7 181.6h0M493.1 161.7h0M488.0 205.3h0M496.5 213.1h0M490.2 180.3h0M488.7 210.4h0M489.3 148.9h0M489.1 212.3h0M490.9 215.6h0M491.1 152.2h0M488.7 157.5h0M496.0 213.2h0M490.6 150.2h0M491.0 172.0h0M490.7 148.3h0M491.7 204.9h0M488.2 180.5h0M495.4 173.1h0M493.2 190.3h0M492.0 219.4h0M495.1 194.5h0M488.0 176.4h0M492.5 193.8h0M491.1 153.8h0M489.5 215.0h0M492.9 159.0h0M492.8 197.1h0M486.9 174.0h0M485.7 165.7h0M490.5 178.6h0M492.2 151.3h0M495.9 218.1h0M491.2 166.1h0M490.6 198.7h0M490.4 164.4h0M485.9 171.5h0M488.9 183.9h0M492.4 160.1h0M488.9 199.2h0M488.7 208.9h0M491.9 164.9h0M488.3 200.7h0M493.5 172.2h0M492.5 161.5h0M489.7 211.3h0M495.0 159.8h0M492.9 138.9h0M492.9 145.4h0M510.8 197.6h0M511.4 178.6h0M505.6 156.7h0M509.8 221.2h0M507.6 209.0h0M515.3 207.3h0M511.7 170.1h0M518.0 226.6h0M511.8 215.7h0M511.7 151.1h0M514.8 179.1h0M506.0 186.4h0M513.0 217.5h0M511.8 201.9h0M508.4 211.8h0M516.0 194.2h0M509.5 227.4h0M515.6 222.6h0M507.7 153.4h0M513.4 199.2h0M507.7 214.5h0M514.2 153.9h0M512.4 179.6h0M516.7 184.3h0M512.4 157.7h0M510.8 163.2h0M516.9 180.2h0M510.4 166.7h0M507.2 161.2h0M512.4 203.6h0M512.5 187.4h0M511.1 193.4h0M509.2 189.6h0M510.1 202.8h0M511.2 206.3h0M509.9 171.1h0M511.3 192.7h0M506.2 154.7h0M509.7 215.3h0M511.3 199.7h0M508.4 213.5h0M516.3 177.8h0M510.5 175.9h0M511.4 190.6h0M516.7 183.5h0M509.9 152.2h0M511.7 187.7h0M507.1 171.5h0M507.8 182.5h0M516.9 223.7h0M512.0 218.5h0M512.6 207.9h0M511.1 156.2h0M513.7 220.8h0M513.9 164.7h0M510.9 213.1h0M509.6 190.1h0M507.9 205.1h0M514.8 225.7h0M508.6 200.8h0M507.9 175.0h0M516.3 219.0h0M505.9 184.7h0M508.5 210.8h0M507.6 181.7h0M509.8 149.5h0M509.4 147.5h0M511.6 150.2h0M515.6 189.0h0M509.4 191.8h0M508.5 205.6h0M511.4 155.8h0M508.3 151.8h0M519.9 173.3h0M509.9 219.8h0M511.1 163.5h0M506.3 172.3h0M516.5 169.0h0M515.1 160.5h0M508.0 167.2h0M507.5 228.2h0M513.7 174.3h0M508.7 196.1h0M518.5 222.0h0M509.8 165.2h0M508.1 166.0h0M508.8 169.4h0M515.4 177.2h0M512.8 185.6h0M510.9 194.4h0M515.3 182.0h0M510.5 158.8h0M508.8 196.9h0M506.0 195.4h0M510.4 201.4h0M508.7 204.3h0M510.7 148.9h0M506.5 158.2h0M519.2 161.9h0M508.2 159.8h0M507.4 210.5h0M511.3 225.2h0M507.8 198.4h0M506.7 223.9h0M506.1 168.1h0M514.0 212.1h0M510.5 228.5h0M509.9 216.5h0M516.9 209.7h0M514.2 148.4h0M517.8 175.2h0M509.2 144.8h0M520.9 186.7h0M522.7 165.7h0M525.3 159.1h0M523.5 164.4h0M522.3 170.8h0M523.6 174.9h0M520.4 182.6h0M522.8 179.0h0M523.5 180.0h0M521.1 169.9h0M521.6 143.5h0M520.9 147.4h0M532.8 168.1h0M536.5 200.5h0M536.0 193.1h0M539.0 206.6h0M538.1 197.4h0M536.8 199.6h0M534.5 203.3h0M537.3 210.4h0M534.8 183.6h0M539.8 195.4h0M533.9 168.8h0M538.7 166.2h0M536.8 176.1h0M537.5 152.6h0M537.6 198.6h0M534.3 175.7h0M535.2 161.6h0M534.7 157.9h0M535.2 181.8h0M537.2 194.2h0M539.6 209.6h0M536.4 207.6h0M537.7 163.6h0M537.4 190.1h0M537.9 171.8h0M537.3 152.2h0M534.2 153.5h0M531.2 180.6h0M531.8 177.1h0M533.5 160.8h0M534.6 157.2h0M535.5 208.0h0M538.8 148.1h0M536.6 169.9h0M539.8 162.4h0M539.7 155.3h0M539.8 188.7h0M539.1 187.3h0M540.0 179.4h0M539.0 182.2h0M533.4 165.3h0M533.7 149.6h0M535.7 203.9h0M534.8 155.9h0M539.9 184.8h0M537.5 188.1h0M536.1 205.4h0M535.3 196.4h0M540.1 174.6h0M537.8 170.9h0M534.4 186.2h0M537.6 178.6h0M537.5 172.7h0M537.9 164.8h0M542.0 192.4h0M535.6 150.6h0M538.4 201.8h0M534.9 159.5h0M536.1 190.8h0M532.7 148.0h0M540.2 216.7h0M538.9 223.2h0M540.5 216.7h0M539.2 223.2h0M554.6 151.3h0M554.0 163.7h0M559.2 161.5h0M556.6 168.0h0M562.2 170.6h0M548.7 177.4h0M553.3 175.1h0M554.0 178.1h0M558.3 178.5h0M563.1 179.7h0M547.4 185.0h0M549.4 188.6h0M554.0 184.0h0M555.3 186.6h0M557.9 187.9h0M558.5 192.5h0M554.0 193.1h0M552.6 194.4h0M548.7 197.0h0M548.1 199.7h0M552.6 199.7h0M562.7 198.0h0M549.4 204.2h0M548.7 208.6h0M548.1 210.1h0M561.1 205.5h0M559.8 208.2h0M550.4 219.3h0M548.7 227.4h0" stroke="#1a1a30" stroke-width="4.5" stroke-linecap="round" fill="none"/>
<rect x="356" y="135" width="1" height="101" fill="#777c82"/>
<rect x="357" y="135" width="1" height="100" fill="#a0a0a0"/>
<rect x="358" y="234" width="215" height="1" fill="#000" fill-opacity="0.15"/>
<rect x="357" y="235" width="216" height="1" fill="#4a4a4a"/>
<path d="M380.5 235v-2M416.5 235v-2M453.5 235v-2M490.5 235v-2M526.5 235v-2M563.5 235v-2M358 235.5h2M358 210.5h2M358 185.5h2M358 160.5h2M358 135.5h2" stroke="#333" stroke-width="1" fill="none"/>
<text x="380.3" y="250.5" text-anchor="middle" font-size="10.5" fill="#262626">1</text>
<text x="416.90000000000003" y="250.5" text-anchor="middle" font-size="10.5" fill="#262626">2</text>
<text x="453.5" y="250.5" text-anchor="middle" font-size="10.5" fill="#262626">3</text>
<text x="490.1" y="250.5" text-anchor="middle" font-size="10.5" fill="#262626">4</text>
<text x="526.7" y="250.5" text-anchor="middle" font-size="10.5" fill="#262626">5</text>
<text x="563.3" y="250.5" text-anchor="middle" font-size="10.5" fill="#262626">6</text>
<text x="351.5" y="239.5" text-anchor="end" font-size="10.5" fill="#262626">10</text>
<text x="351.5" y="214.5" text-anchor="end" font-size="10.5" fill="#262626">20</text>
<text x="351.5" y="189.5" text-anchor="end" font-size="10.5" fill="#262626">30</text>
<text x="351.5" y="164.5" text-anchor="end" font-size="10.5" fill="#262626">40</text>
<text x="351.5" y="139.5" text-anchor="end" font-size="10.5" fill="#262626">50</text>
<text x="465.0" y="266.5" text-anchor="middle" font-size="11.55" fill="#262626">load [bar]</text>
<text transform="translate(332.7,185.0) rotate(-90)" text-anchor="middle" font-size="11.75" fill="#262626">injection [deg CA]</text>
<rect x="644" y="135" width="215" height="100" fill="#fff"/>
<path d="M650.5 135V235M700.5 135V235M751.5 135V235M801.5 135V235M851.5 135V235M644 234.5H859M644 186.5H859M644 138.5H859" stroke="#e3e3e3" stroke-width="1" fill="none"/>
<path d="M750.2 191.6h0M804.8 202.6h0M708.2 152.2h0M657.3 167.9h0M697.4 149.5h0M746.3 222.5h0M834.0 193.4h0M699.5 164.2h0M795.5 168.5h0M726.9 206.2h0M750.3 226.1h0M755.6 147.0h0M751.7 185.5h0M672.8 152.1h0M703.5 162.8h0M704.8 169.1h0M788.9 211.7h0M792.7 191.6h0M838.6 192.4h0M835.3 222.6h0M683.3 168.9h0M762.2 165.5h0M762.9 176.5h0M723.3 209.3h0M752.5 203.0h0M729.1 186.0h0M754.4 190.7h0M812.6 180.6h0M701.3 144.5h0M801.9 187.1h0M805.3 191.7h0M712.8 139.3h0M768.8 185.4h0M767.0 150.3h0M780.7 163.6h0M794.1 182.6h0M734.9 157.3h0M653.4 197.8h0M723.7 218.4h0M767.6 210.8h0M674.9 151.5h0M692.7 188.5h0M812.0 154.6h0M739.1 225.0h0M695.9 176.3h0M725.0 157.7h0M847.3 212.5h0M848.5 163.1h0M770.6 161.3h0M660.3 228.3h0M731.3 178.6h0M776.3 150.5h0M754.8 146.4h0M702.0 208.3h0M719.0 140.8h0M695.2 195.3h0M763.7 157.2h0M800.1 190.5h0M802.1 161.0h0M848.1 204.4h0M690.3 182.0h0M689.0 184.9h0M783.1 148.1h0M659.1 196.5h0M727.0 151.0h0M763.8 159.2h0M806.5 154.7h0M839.7 161.0h0M765.4 192.9h0M721.1 174.2h0M657.9 207.3h0M715.5 159.9h0M683.6 172.8h0M692.6 212.9h0M708.9 151.7h0M684.7 179.7h0M782.7 212.4h0M686.3 162.5h0M836.5 165.4h0M816.7 176.0h0M760.2 143.7h0M789.2 220.5h0M741.9 173.2h0M829.8 173.5h0M830.6 151.6h0M819.4 145.9h0M669.2 165.6h0M833.6 163.6h0M808.1 185.1h0M769.5 141.9h0M804.4 184.2h0M685.6 168.1h0M816.0 167.6h0M775.4 212.2h0M783.8 145.8h0M767.7 173.3h0M677.3 202.2h0M817.4 178.4h0M742.4 165.9h0M751.8 156.8h0M768.8 182.8h0M656.6 203.9h0M726.9 188.8h0M770.1 219.0h0M796.1 227.1h0M654.0 208.6h0M669.2 156.7h0M818.9 166.3h0M846.5 208.6h0M806.6 191.6h0M740.4 177.4h0M771.9 174.9h0M723.0 210.1h0M790.9 157.0h0M750.5 162.2h0M713.3 173.2h0M680.8 226.8h0M692.8 149.8h0M693.0 216.3h0M789.0 174.4h0M782.8 220.0h0M741.4 210.0h0M715.1 210.0h0M689.4 209.7h0M752.4 188.4h0M823.6 167.9h0M659.2 194.1h0M827.4 154.5h0M716.4 187.6h0M735.1 213.8h0M697.8 173.7h0M783.3 153.2h0M757.9 155.3h0M765.3 162.5h0M827.4 172.2h0M788.4 202.6h0M714.3 150.3h0M738.7 179.3h0M756.7 223.9h0M700.0 226.8h0M779.0 147.9h0M659.2 160.3h0M751.8 161.9h0M761.6 181.5h0M745.5 169.1h0M834.1 158.5h0M681.2 176.2h0M783.6 139.8h0M707.6 203.9h0M696.0 144.2h0M759.5 185.9h0M734.5 148.1h0M705.0 218.5h0M684.5 145.1h0M762.3 160.0h0M666.3 179.5h0M673.9 160.0h0M840.9 218.5h0M701.9 176.9h0M814.8 142.2h0M754.5 194.8h0M673.8 153.1h0M749.1 151.6h0M764.8 161.3h0M715.6 210.4h0M838.6 189.6h0M720.2 140.2h0M770.7 210.6h0M843.1 181.0h0M783.4 225.1h0M754.7 210.0h0M657.1 214.3h0M799.7 157.8h0M801.0 152.1h0M795.0 179.0h0M805.8 149.2h0M821.2 206.9h0M724.6 185.8h0M822.7 212.9h0M797.0 223.1h0M679.4 144.0h0M739.5 180.9h0M799.5 157.5h0M678.2 179.3h0M750.5 140.9h0M765.7 185.2h0M763.5 177.3h0M785.0 142.7h0M659.5 158.5h0M823.3 181.5h0M814.0 194.2h0M820.3 199.6h0M711.8 174.2h0M777.9 146.2h0M834.0 159.2h0M706.3 164.5h0M682.1 169.4h0M812.0 205.6h0M723.0 149.6h0M832.0 214.3h0M838.7 219.8h0M836.9 224.3h0M757.5 162.8h0M829.9 217.3h0M691.9 203.7h0M805.3 226.8h0M784.1 177.3h0M780.6 162.7h0M836.9 193.3h0M707.1 202.8h0M790.5 165.6h0M710.3 227.2h0M790.7 191.2h0M767.8 205.9h0M756.3 212.0h0M783.2 208.5h0M668.4 205.2h0M831.3 140.1h0M712.6 228.5h0M771.0 150.0h0M777.8 189.9h0M847.0 141.2h0M704.8 171.0h0M814.3 207.2h0M697.1 220.3h0M824.4 200.0h0M670.3 179.7h0M681.7 218.8h0M674.0 141.9h0M830.9 161.9h0M771.1 199.7h0M724.4 161.5h0M796.8 212.2h0M843.9 184.1h0M714.7 178.5h0M786.1 162.9h0M797.0 225.7h0M777.7 155.8h0M751.3 150.0h0M752.2 170.2h0M741.6 149.9h0M761.2 221.1h0M833.4 142.7h0M685.7 185.0h0M717.5 158.8h0M659.3 170.6h0M820.3 170.9h0M831.8 156.0h0M826.8 156.0h0M691.5 173.5h0M816.3 170.3h0M841.1 218.7h0M669.1 154.7h0M808.0 165.2h0M698.5 191.7h0M719.2 152.3h0M752.9 163.7h0M705.8 153.9h0M691.7 225.3h0M673.5 167.2h0M767.8 149.9h0M797.4 188.0h0M839.5 228.9h0M767.1 174.4h0M816.9 167.2h0M735.5 160.9h0M804.2 149.3h0M790.7 192.0h0M723.1 157.8h0M830.9 139.1h0M839.1 178.8h0M772.1 140.0h0M763.4 198.1h0M694.8 174.1h0M749.6 202.2h0M702.0 212.8h0M830.8 214.3h0M685.9 200.2h0M811.2 172.3h0M689.3 196.5h0M770.5 203.5h0M749.3 139.2h0M712.8 214.9h0M814.6 145.0h0M695.5 192.0h0M801.5 218.5h0M787.9 195.5h0M657.0 221.0h0M684.6 177.3h0M791.4 149.9h0M734.5 157.2h0M658.1 141.2h0M772.2 187.9h0M795.9 159.2h0M805.0 193.1h0M716.6 228.4h0M776.0 181.9h0M772.5 188.1h0M749.7 208.3h0M758.0 218.3h0M825.9 176.5h0M658.2 205.6h0M838.6 183.9h0M765.4 178.9h0M771.3 151.7h0M678.3 173.0h0M830.2 166.6h0M712.9 220.6h0M767.2 207.9h0M743.7 159.8h0M759.6 147.5h0M744.1 139.7h0M706.4 143.6h0M655.0 179.4h0M750.7 199.2h0M778.4 155.0h0M667.0 177.9h0M742.8 162.8h0M718.9 152.0h0M681.5 166.3h0M724.5 186.8h0M698.2 179.6h0M760.9 207.6h0M775.4 196.7h0M807.8 194.5h0M680.7 205.1h0M791.0 166.8h0M704.4 147.1h0M717.6 168.8h0M661.7 221.5h0M776.5 141.1h0M805.2 179.7h0M811.2 225.7h0M663.5 229.2h0M763.1 150.5h0M762.2 182.9h0M824.9 170.5h0M769.7 156.1h0M776.4 204.6h0M757.9 171.5h0M691.3 220.4h0M845.8 144.0h0M746.0 224.4h0M692.8 230.1h0M737.9 147.0h0M694.2 161.5h0M737.8 165.4h0M671.8 228.0h0M694.1 152.6h0M815.3 186.9h0M700.1 187.7h0M835.6 148.5h0M810.5 209.6h0M835.2 145.9h0M777.2 155.3h0M844.8 148.6h0M736.8 157.0h0M769.9 181.3h0M701.0 162.2h0M838.7 177.1h0M688.3 219.4h0M672.1 143.4h0M676.5 157.4h0M710.8 155.0h0M793.3 210.5h0M818.9 210.0h0M653.5 198.1h0M848.9 191.8h0M742.8 174.0h0M709.0 169.2h0M737.6 199.2h0M658.1 227.0h0M822.2 162.3h0M676.9 222.0h0M785.7 173.6h0M842.7 165.8h0M700.7 215.6h0M840.8 163.5h0M656.7 181.0h0M709.7 145.4h0M800.3 215.8h0M697.2 185.8h0M809.5 188.7h0M693.4 156.2h0M678.0 208.6h0M662.2 174.3h0M836.0 150.2h0M782.1 148.5h0M763.3 218.2h0M786.3 200.8h0M662.5 218.0h0M668.5 164.8h0M677.0 173.6h0M708.8 179.7h0M676.1 146.1h0M769.5 198.9h0M703.5 159.8h0M663.7 198.1h0M708.1 190.0h0M658.9 168.2h0M826.4 211.6h0M731.5 194.3h0M664.9 151.3h0M697.7 190.7h0M804.1 217.8h0M845.4 190.0h0M697.4 204.4h0M784.6 230.3h0M832.3 152.2h0M846.1 198.0h0M725.7 177.1h0M819.9 207.7h0M694.4 193.5h0M830.8 152.6h0M820.2 142.2h0M715.8 173.8h0M689.6 149.9h0M664.7 218.3h0M709.7 218.7h0M678.5 170.8h0M697.4 174.7h0M703.5 206.0h0M741.3 196.9h0M740.0 142.1h0M742.1 180.4h0M724.8 223.7h0M805.8 165.7h0M829.7 168.1h0M766.5 194.8h0M673.9 188.4h0M747.4 149.8h0M799.0 157.5h0M845.2 142.0h0M762.9 208.8h0M681.7 194.9h0M798.3 230.7h0M801.2 157.4h0M731.7 161.2h0M734.8 192.8h0M832.4 170.0h0M732.9 190.9h0M795.2 166.0h0M746.0 172.5h0M776.8 224.4h0M754.1 172.2h0M787.0 173.1h0M723.4 184.7h0M842.4 164.6h0M724.6 221.9h0M741.0 191.9h0M813.2 192.7h0M700.2 146.9h0M788.1 161.7h0M702.2 184.9h0M811.2 215.9h0M764.7 216.0h0M785.7 229.1h0M700.8 143.3h0M796.6 219.4h0M827.5 215.5h0M753.1 176.8h0M664.1 182.7h0M671.9 155.0h0M765.3 209.7h0M701.6 172.7h0M656.2 205.8h0M800.4 186.4h0M675.1 178.3h0M756.8 212.5h0M732.7 226.5h0M796.8 192.5h0M779.7 180.2h0M791.5 195.8h0M663.2 229.6h0M765.0 187.6h0M775.6 202.8h0M714.2 207.2h0M672.3 181.3h0M728.4 171.7h0M673.7 141.5h0M822.6 218.6h0M788.5 207.2h0M806.3 145.5h0M833.5 171.4h0M706.1 155.8h0M683.1 174.5h0M756.5 192.8h0M764.3 199.6h0M825.4 223.1h0M745.2 224.6h0M789.8 224.3h0M653.9 194.3h0M793.6 171.4h0M704.6 229.3h0M713.6 198.0h0M655.3 144.3h0M840.2 229.4h0M832.3 214.0h0M677.7 147.1h0M777.0 227.8h0M808.2 209.5h0M684.5 184.1h0M841.4 204.7h0M707.9 190.0h0M846.0 205.4h0M832.2 154.4h0M802.4 214.9h0M813.2 157.0h0M792.0 197.4h0M734.6 167.5h0M732.8 141.6h0M692.2 224.5h0M775.7 218.0h0M807.2 209.4h0M775.0 179.5h0M719.4 165.8h0M702.7 144.2h0M711.3 227.9h0M816.6 208.8h0M670.0 224.3h0M802.7 214.2h0M847.8 193.0h0M732.0 189.2h0M701.7 141.5h0M681.1 198.9h0M699.0 144.3h0M820.3 182.9h0M799.9 150.3h0M667.4 168.1h0M659.8 164.2h0M740.8 176.2h0M790.4 198.7h0M732.5 152.3h0M723.4 165.8h0M801.9 223.2h0M807.9 177.7h0M831.0 144.8h0M689.8 154.1h0M767.0 153.4h0M697.6 189.8h0M783.3 182.5h0M662.4 139.8h0M789.5 194.2h0M717.2 146.0h0M844.0 151.4h0M810.3 221.6h0M786.2 163.2h0M781.8 205.9h0M772.5 227.0h0M681.4 215.4h0M728.7 182.8h0M767.8 140.9h0M760.7 143.2h0M685.7 186.7h0M837.2 141.4h0M758.4 185.7h0M804.0 187.6h0M653.2 203.8h0M785.2 165.3h0M753.7 164.6h0M755.9 202.0h0M709.0 154.5h0M783.6 211.9h0M804.6 149.3h0M668.7 219.7h0M825.6 163.6h0M712.1 190.8h0M845.8 174.5h0M707.4 157.3h0M657.8 183.4h0M712.7 179.6h0M674.5 199.8h0M701.1 212.2h0M837.9 171.4h0M714.2 190.1h0M751.9 142.7h0M654.6 189.8h0M792.5 150.1h0M790.9 197.8h0M828.9 170.9h0M792.9 148.7h0M791.6 203.1h0M753.0 141.3h0M788.2 228.5h0M706.1 229.7h0M724.1 194.7h0M743.4 162.0h0M719.7 212.1h0M811.3 159.1h0M681.5 146.9h0M846.5 179.6h0M769.8 153.4h0M789.0 161.5h0M693.4 160.7h0M807.3 160.4h0M706.2 168.2h0M682.6 222.7h0M743.2 144.4h0M824.3 161.4h0M744.1 191.1h0M735.6 171.1h0M683.7 192.5h0M745.5 156.0h0M740.7 215.0h0M780.9 159.9h0M712.4 184.6h0M769.8 143.7h0M804.8 155.1h0M843.0 139.1h0M733.9 184.5h0M734.3 190.2h0M764.3 183.1h0M664.5 160.9h0M758.5 228.6h0M807.2 139.0h0M763.9 195.1h0M702.0 156.8h0M721.5 195.1h0M699.8 205.8h0M656.1 189.6h0M801.5 223.8h0M677.6 182.9h0M714.5 163.9h0M810.3 227.3h0M831.9 197.5h0M811.6 178.2h0M657.7 201.5h0M837.3 191.4h0M845.5 204.6h0M817.4 153.5h0M811.1 176.7h0M675.6 177.0h0M756.8 180.1h0M834.8 151.1h0M725.6 218.0h0M702.7 179.9h0M817.2 207.2h0M729.1 168.8h0M844.4 144.6h0M785.1 179.8h0M697.6 181.8h0M843.6 207.5h0M824.1 150.8h0M817.1 147.0h0M780.6 158.9h0M835.1 168.5h0M739.4 182.7h0M803.6 150.8h0M702.2 200.7h0M764.7 174.1h0M686.8 171.6h0M824.8 148.4h0M720.7 217.1h0M655.9 147.8h0M822.3 155.0h0M733.7 151.3h0M822.3 191.3h0M677.9 154.0h0M721.3 143.7h0M828.6 214.0h0M684.9 170.7h0M755.5 146.5h0M765.3 158.3h0M723.8 179.2h0M766.9 182.8h0M753.6 186.7h0M705.1 171.6h0M786.9 208.8h0M762.8 214.2h0M771.8 153.7h0M752.6 154.6h0M665.2 164.6h0M679.1 164.1h0M690.5 227.1h0M794.7 191.7h0M812.0 195.5h0M731.9 160.0h0M707.1 177.1h0M820.5 215.8h0M726.7 172.3h0M847.8 185.5h0M688.6 178.7h0M795.7 196.4h0M727.1 163.7h0M707.7 165.5h0M767.3 209.2h0M804.7 146.1h0M801.9 212.4h0M692.6 178.8h0M784.6 147.8h0M801.9 191.5h0M789.9 180.1h0M749.9 154.9h0M722.7 206.1h0M684.1 160.7h0M671.8 160.2h0M685.2 218.3h0M841.9 156.8h0M788.7 185.5h0M727.4 161.0h0M717.6 189.5h0M704.1 204.7h0M760.2 189.5h0M736.8 219.0h0M702.1 227.9h0M768.7 140.2h0M764.1 173.6h0M659.9 178.5h0M653.2 212.2h0M698.4 179.6h0M836.7 165.3h0M687.2 220.4h0M720.6 153.7h0M670.9 197.7h0M811.1 140.2h0M692.2 177.2h0M738.9 182.3h0M692.2 177.7h0M774.2 152.7h0M745.0 170.6h0M847.6 143.6h0M775.8 168.2h0M845.3 195.4h0M765.7 154.5h0M725.2 189.3h0M812.6 144.1h0M692.2 222.1h0M677.2 169.5h0M756.9 164.9h0M840.0 144.6h0M672.4 156.3h0M662.9 144.9h0M726.5 202.0h0M798.3 203.0h0M717.0 180.2h0M818.7 192.6h0M674.2 198.6h0M772.0 208.1h0M777.2 158.6h0M666.0 148.3h0M759.4 204.5h0M823.0 225.2h0M796.6 224.0h0M739.6 142.8h0M799.0 140.8h0M753.5 219.9h0M664.0 178.2h0M720.9 219.8h0M794.9 200.0h0M737.4 178.0h0M747.0 164.6h0M669.3 166.4h0M738.3 160.6h0M669.5 139.1h0M691.2 195.2h0M683.7 201.2h0M675.5 167.9h0M678.8 167.3h0M820.3 150.4h0M790.2 199.4h0M750.0 215.5h0M701.2 227.7h0M822.9 219.8h0M716.5 171.0h0M793.4 168.6h0M776.9 165.2h0M783.1 149.8h0M717.4 139.9h0M839.8 150.2h0M807.4 212.1h0M677.9 165.1h0M742.2 150.8h0M677.6 217.5h0M770.7 147.6h0M802.2 185.5h0M839.0 182.2h0M696.7 192.8h0M826.0 155.6h0M665.9 220.9h0M804.4 168.8h0M690.5 145.2h0M771.0 150.6h0M750.9 162.5h0M773.6 170.8h0M702.3 170.3h0M673.6 188.5h0M812.7 172.1h0M700.7 168.8h0M836.7 179.6h0M811.9 140.5h0M825.2 154.9h0M701.2 142.7h0M786.3 190.1h0M810.1 179.3h0M763.4 177.7h0M679.8 147.9h0M770.8 156.7h0M781.1 218.8h0M801.7 194.5h0M678.1 204.4h0M663.6 162.1h0M733.4 224.7h0M810.3 162.5h0M834.1 169.7h0M782.1 229.1h0M688.0 140.4h0M796.5 190.5h0M817.0 153.7h0M816.0 196.6h0M694.9 209.3h0M847.1 179.0h0M761.0 192.1h0M692.6 194.2h0M760.8 145.7h0M810.6 227.4h0M847.8 184.6h0M761.3 212.3h0M823.2 217.8h0M815.8 197.3h0M774.3 150.6h0M765.8 182.7h0M687.4 197.0h0M788.8 221.9h0M729.4 206.5h0" stroke="#1a1a30" stroke-width="4.5" stroke-linecap="round" fill="none"/>
<rect x="642" y="135" width="1" height="101" fill="#777c82"/>
<rect x="643" y="135" width="1" height="100" fill="#a0a0a0"/>
<rect x="644" y="234" width="215" height="1" fill="#000" fill-opacity="0.15"/>
<rect x="643" y="235" width="216" height="1" fill="#4a4a4a"/>
<path d="M650.5 235v-2M700.5 235v-2M751.5 235v-2M801.5 235v-2M851.5 235v-2M644 234.5h2M644 186.5h2M644 138.5h2" stroke="#333" stroke-width="1" fill="none"/>
<text x="650.5" y="250.5" text-anchor="middle" font-size="10.5" fill="#262626">-6</text>
<text x="700.8" y="250.5" text-anchor="middle" font-size="10.5" fill="#262626">-4</text>
<text x="751.1" y="250.5" text-anchor="middle" font-size="10.5" fill="#262626">-2</text>
<text x="801.4" y="250.5" text-anchor="middle" font-size="10.5" fill="#262626">0</text>
<text x="851.7" y="250.5" text-anchor="middle" font-size="10.5" fill="#262626">2</text>
<text x="637.5" y="238.7" text-anchor="end" font-size="10.5" fill="#262626">10</text>
<text x="637.5" y="190.35" text-anchor="end" font-size="10.5" fill="#262626">15</text>
<text x="637.5" y="142.0" text-anchor="end" font-size="10.5" fill="#262626">20</text>
<text x="751.0" y="266.5" text-anchor="middle" font-size="11.55" fill="#262626">ignition [deg CA]</text>
<text transform="translate(619,185.0) rotate(-90)" text-anchor="middle" font-size="11.75" fill="#262626">fuel_pressure [bar]</text>
<rect x="72" y="346" width="215" height="100" fill="#fff"/>
<path d="M72.5 346V446M118.5 346V446M165.5 346V446M211.5 346V446M258.5 346V446M72 437.5H287M72 418.5H287M72 398.5H287M72 379.5H287M72 359.5H287" stroke="#e3e3e3" stroke-width="1" fill="none"/>
<path d="M159.5 365.2h0M125.7 401.2h0M151.0 383.5h0M111.1 398.7h0M165.1 375.5h0M196.7 441.1h0M209.0 432.1h0M112.9 416.8h0M173.4 387.2h0M153.2 381.1h0M125.5 382.1h0M117.8 352.8h0M141.5 363.7h0M124.0 405.5h0M134.9 398.8h0M141.1 420.2h0M98.8 427.7h0M119.2 396.8h0M113.9 412.1h0M119.3 373.5h0M100.3 392.0h0M140.7 368.0h0M208.0 354.0h0M116.6 431.8h0M141.4 373.6h0M133.9 425.0h0M118.6 373.5h0M135.9 370.7h0M98.0 383.9h0M147.1 383.6h0M109.0 429.3h0M111.8 399.1h0M145.3 384.1h0M183.1 376.7h0M116.0 384.8h0M151.2 417.0h0M124.3 391.7h0M147.9 430.3h0M189.2 437.1h0M112.2 352.9h0M100.7 377.0h0M92.9 438.4h0M127.1 438.3h0M138.5 399.9h0M113.9 414.0h0M128.6 360.9h0M112.9 381.6h0M136.8 385.1h0M99.8 404.2h0M109.0 429.7h0M132.9 420.1h0M120.7 405.5h0M159.2 356.2h0M190.5 390.1h0M118.8 441.1h0M120.8 358.7h0M154.8 421.6h0M98.7 413.9h0M122.1 379.5h0M164.6 391.2h0M113.9 377.2h0M175.3 375.6h0M117.2 421.0h0M141.0 409.0h0M151.8 364.1h0M198.1 403.9h0M170.1 382.8h0M140.3 438.4h0M178.2 398.4h0M119.3 397.4h0M119.7 388.8h0M129.0 374.2h0M135.2 396.4h0M156.6 407.3h0M206.1 419.5h0M153.5 426.7h0M112.6 429.5h0M100.6 423.1h0M120.0 431.2h0M155.4 399.0h0M125.4 397.4h0M183.0 400.9h0M190.9 415.1h0M147.8 417.6h0M127.8 365.1h0M143.5 424.1h0M123.1 413.2h0M153.5 390.3h0M122.1 421.2h0M160.2 382.2h0M187.7 431.1h0M111.0 421.3h0M133.3 363.3h0M105.5 368.5h0M144.5 422.4h0M143.6 378.7h0M194.9 425.2h0M124.7 373.2h0M119.8 380.2h0M157.2 403.9h0M153.7 429.3h0M98.3 407.9h0M137.1 413.3h0M141.4 423.0h0M134.9 384.5h0M172.4 403.5h0M123.4 434.2h0M102.0 352.6h0M128.9 394.9h0M106.4 375.3h0M129.3 362.2h0M210.6 372.4h0M142.3 369.5h0M136.8 395.1h0M142.7 376.0h0M156.5 385.6h0M162.3 422.2h0M107.4 384.3h0M116.7 351.9h0M98.1 364.6h0M148.8 368.2h0M128.3 397.2h0M121.6 365.2h0M190.3 409.4h0M148.5 418.2h0M160.2 366.7h0M154.8 362.9h0M182.1 364.9h0M96.8 423.3h0M101.6 432.4h0M157.3 419.1h0M102.5 390.1h0M206.9 390.1h0M159.6 377.2h0M130.4 417.1h0M104.0 407.5h0M145.5 408.3h0M205.0 398.1h0M149.4 397.2h0M123.2 439.0h0M111.9 413.4h0M186.9 428.8h0M97.1 380.1h0M113.1 378.3h0M126.5 433.4h0M154.5 356.4h0M105.2 384.5h0M192.9 367.1h0M140.9 389.6h0M98.2 423.6h0M122.7 355.4h0M159.6 378.8h0M125.8 422.0h0M108.3 427.4h0M101.2 360.8h0M176.5 389.2h0M92.4 376.5h0M148.5 391.8h0M139.8 353.8h0M122.3 406.6h0M132.3 353.6h0M126.8 359.2h0M131.4 351.1h0M95.2 382.2h0M110.6 439.9h0M133.8 392.9h0M97.0 381.2h0M116.5 364.3h0M131.3 391.0h0M121.7 416.0h0M123.2 360.1h0M135.9 372.8h0M135.9 436.4h0M120.7 374.0h0M134.4 436.1h0M103.2 374.9h0M155.7 426.5h0M100.4 415.8h0M124.7 427.3h0M182.7 364.5h0M180.2 353.2h0M138.1 376.2h0M198.8 387.7h0M145.1 423.1h0M190.5 405.3h0M173.4 409.9h0M153.6 422.1h0M131.6 438.6h0M139.7 422.5h0M147.2 415.8h0M127.6 404.7h0M92.4 358.7h0M98.7 439.4h0M147.0 379.0h0M94.2 369.8h0M125.3 414.4h0M99.9 397.5h0M131.0 389.1h0M138.7 426.4h0M127.2 419.8h0M205.4 353.5h0M149.1 386.6h0M110.5 372.2h0M105.4 433.6h0M138.0 434.0h0M97.7 367.5h0M100.6 376.1h0M146.4 428.3h0M205.0 351.3h0M150.2 400.3h0M192.1 370.0h0M109.6 385.7h0M120.7 395.8h0M96.1 411.7h0M106.7 382.3h0M155.8 363.4h0M113.3 361.8h0M207.9 362.7h0M96.6 409.7h0M95.4 408.6h0M125.1 373.5h0M127.2 371.0h0M111.5 419.4h0M105.6 409.1h0M126.5 386.4h0M117.5 397.3h0M179.9 433.7h0M191.0 386.8h0M148.1 437.5h0M194.6 353.3h0M151.3 373.2h0M174.7 380.7h0M210.6 404.1h0M113.4 396.6h0M106.1 418.3h0M162.7 389.1h0M122.7 386.7h0M162.0 371.0h0M183.3 390.2h0M146.7 389.2h0M102.2 429.9h0M113.3 381.1h0M179.0 418.5h0M98.1 372.0h0M170.1 380.3h0M156.6 397.0h0M193.2 397.3h0M125.0 377.1h0M143.7 371.0h0M162.8 384.3h0M107.3 403.9h0M94.7 437.6h0M195.3 357.2h0M146.9 393.5h0M146.3 438.3h0M164.1 382.0h0M195.8 419.9h0M191.2 365.0h0M104.5 403.2h0M107.8 408.2h0M164.7 382.7h0M136.2 391.6h0M158.7 352.3h0M104.9 369.7h0M162.7 359.8h0M94.6 395.2h0M151.9 383.3h0M98.7 393.9h0M135.7 366.3h0M162.4 420.8h0M110.2 409.3h0M174.3 399.3h0M124.4 416.3h0M168.5 439.6h0M98.3 400.9h0M169.6 434.3h0M97.3 394.1h0M132.9 356.0h0M119.5 377.7h0M101.6 361.9h0M96.2 368.3h0M98.8 352.5h0M207.5 391.8h0M104.4 418.4h0M115.2 410.5h0M93.6 441.0h0M123.9 397.5h0M156.7 381.2h0M101.2 354.3h0M106.9 440.7h0M139.7 375.4h0M188.0 390.6h0M121.3 359.3h0M181.2 359.3h0M167.9 437.8h0M137.4 371.8h0M100.1 439.7h0M132.0 403.8h0M210.4 395.2h0M104.5 384.4h0M123.3 438.3h0M138.8 389.8h0M113.1 419.0h0M106.4 437.5h0M153.1 416.1h0M114.3 429.6h0M153.7 392.7h0M154.8 408.1h0M104.8 358.1h0M101.3 351.7h0M192.3 373.1h0M161.3 430.1h0M152.9 403.2h0M153.6 389.2h0M166.9 426.6h0M101.8 384.1h0M131.0 409.7h0M105.6 393.5h0M119.1 366.7h0M94.1 372.0h0M173.2 423.9h0M191.8 432.4h0M99.2 396.3h0M100.9 367.4h0M110.5 362.2h0M122.4 376.4h0M134.6 383.8h0M123.1 431.5h0M107.8 407.7h0M145.1 426.5h0M158.3 362.9h0M146.2 401.7h0M167.8 407.7h0M121.5 367.9h0M101.5 374.7h0M120.5 415.6h0M113.0 402.9h0M111.8 417.1h0M166.3 392.8h0M137.0 417.7h0M107.1 428.3h0M135.4 437.3h0M117.1 391.8h0M117.5 389.1h0M193.7 366.3h0M94.7 423.3h0M103.2 359.8h0M109.9 374.8h0M137.4 372.3h0M161.5 415.5h0M159.1 360.9h0M194.4 379.5h0M120.2 376.4h0M177.9 386.0h0M145.8 410.3h0M138.8 419.4h0M182.0 392.5h0M99.3 369.5h0M136.5 382.9h0M157.1 375.6h0M207.2 419.3h0M99.1 423.6h0M187.2 357.7h0M200.5 375.4h0M121.1 370.7h0M191.5 370.7h0M105.5 397.9h0M123.3 422.5h0M202.9 426.0h0M97.8 361.5h0M115.5 434.3h0M145.6 416.8h0M97.1 382.8h0M105.3 416.5h0M95.5 428.4h0M143.2 391.3h0M106.7 420.5h0M183.1 357.7h0M209.9 397.1h0M133.5 423.0h0M113.6 403.4h0M116.4 420.4h0M131.7 379.5h0M123.4 398.2h0M94.0 418.0h0M134.8 411.4h0M133.8 439.3h0M144.6 405.2h0M104.4 437.5h0M146.4 386.1h0M143.8 418.3h0M131.3 382.8h0M126.2 428.9h0M115.8 438.0h0M92.7 356.8h0M120.4 363.5h0M142.2 399.5h0M143.2 412.6h0M132.3 371.3h0M103.2 428.2h0M112.9 378.1h0M205.0 356.8h0M190.3 359.0h0M100.5 435.1h0M131.8 432.5h0M110.6 438.8h0M207.9 371.4h0M136.9 359.5h0M203.3 430.8h0M159.0 375.6h0M119.8 377.0h0M149.6 389.5h0M112.8 384.7h0M153.7 405.4h0M154.1 374.3h0M173.6 394.7h0M210.5 370.8h0M105.7 355.8h0M122.1 389.5h0M95.5 427.1h0M123.7 426.0h0M114.6 395.6h0M105.6 393.7h0M131.9 432.8h0M105.4 351.1h0M107.9 432.7h0M120.4 421.8h0M120.8 357.0h0M96.7 438.9h0M98.3 429.2h0M128.5 409.5h0M124.6 364.4h0M150.4 359.2h0M143.9 374.7h0M158.9 428.5h0M154.1 352.0h0M99.9 373.6h0M155.8 420.6h0M207.8 356.1h0M99.5 401.6h0M121.3 360.5h0M191.5 371.6h0M143.6 410.9h0M121.0 358.4h0M178.9 389.2h0M99.1 425.4h0M140.2 391.5h0M175.4 403.0h0M133.8 432.9h0M172.8 363.4h0M128.3 389.5h0M166.1 373.2h0M105.3 384.5h0M193.7 381.4h0M111.2 438.0h0M121.1 439.5h0M119.0 358.4h0M144.0 383.8h0M157.7 399.0h0M112.3 420.7h0M132.2 410.4h0M175.5 413.5h0M104.4 391.6h0M124.9 407.6h0M190.2 372.9h0M106.7 355.1h0M126.7 411.9h0M95.3 421.1h0M133.4 411.5h0M98.4 435.3h0M92.7 407.1h0M142.5 406.6h0M137.8 411.7h0M123.4 407.3h0M120.0 429.7h0M138.2 394.4h0M104.3 356.0h0M109.7 354.0h0M155.1 420.0h0M112.7 412.8h0M161.2 404.4h0M147.0 433.5h0M191.6 420.6h0M131.0 353.3h0M166.0 362.1h0M113.9 438.9h0M117.3 396.2h0M114.6 393.6h0M118.3 365.3h0M194.4 383.1h0M182.8 403.7h0M116.0 379.1h0M96.6 367.9h0M109.4 387.8h0M141.0 357.0h0M151.0 382.5h0M129.9 435.5h0M130.3 431.6h0M146.4 364.7h0M99.7 374.7h0M146.3 381.7h0M116.8 400.2h0M104.3 370.0h0M154.1 418.6h0M124.2 401.0h0M134.2 366.8h0M206.0 414.3h0M189.2 430.5h0M98.7 412.5h0M105.5 409.1h0M176.5 366.4h0M105.9 353.5h0M103.8 354.3h0M123.3 430.2h0M158.1 363.6h0M114.7 359.8h0M146.4 404.3h0M125.5 421.1h0M170.4 406.6h0M117.9 401.7h0M120.5 426.0h0M92.3 423.8h0M147.6 383.5h0M107.1 398.9h0M94.9 399.0h0M184.1 379.0h0M156.0 413.6h0M93.4 429.6h0M179.1 368.0h0M169.2 430.3h0M145.1 352.4h0M95.7 435.1h0M193.2 386.9h0M104.4 364.3h0M111.7 352.6h0M151.5 382.7h0M116.9 382.5h0M169.8 397.1h0M105.8 368.0h0M96.5 404.7h0M118.0 396.7h0M115.3 436.1h0M126.8 391.3h0M105.7 419.4h0M182.8 432.9h0M103.8 402.3h0M97.5 358.0h0M135.1 412.5h0M207.3 381.9h0M168.9 398.6h0M209.4 384.5h0M112.7 370.4h0M177.0 369.1h0M190.7 389.6h0M124.5 421.5h0M120.0 369.5h0M126.5 365.5h0M158.8 401.8h0M129.1 373.3h0M97.8 380.8h0M207.5 430.7h0M101.3 409.4h0M145.7 424.5h0M97.0 389.8h0M98.0 418.0h0M127.1 374.3h0M96.9 368.3h0M112.9 396.2h0M120.1 423.6h0M99.1 364.1h0M123.1 413.8h0M113.7 436.1h0M175.8 418.5h0M148.0 405.8h0M135.4 395.6h0M148.3 420.5h0M187.3 367.5h0M129.9 386.7h0M145.4 403.0h0M102.7 357.4h0M176.2 352.7h0M135.3 370.4h0M178.9 355.2h0M100.4 408.7h0M154.1 399.7h0M121.8 431.8h0M138.9 374.2h0M144.0 361.6h0M111.1 427.1h0M188.6 436.9h0M164.4 406.7h0M114.6 407.6h0M102.9 395.1h0M151.7 407.0h0M110.5 402.6h0M116.7 380.2h0M153.6 400.0h0M158.8 412.1h0M177.9 389.6h0M95.3 416.4h0M147.0 405.6h0M123.1 360.5h0M210.5 412.5h0M126.4 428.2h0M150.0 399.3h0M149.6 372.0h0M159.9 433.4h0M146.2 386.8h0M153.6 364.5h0M123.2 385.8h0M172.7 367.8h0M98.7 398.6h0M198.6 356.3h0M159.3 422.1h0M171.9 430.5h0M205.2 356.5h0M196.1 418.8h0M200.4 373.0h0M104.9 353.4h0M155.1 441.0h0M103.3 436.4h0M131.0 398.0h0M147.0 388.3h0M138.6 366.5h0M128.7 371.3h0M93.6 384.4h0M204.6 407.4h0M151.3 439.3h0M160.1 421.4h0M181.8 397.7h0M101.9 390.0h0M102.9 366.6h0M136.8 433.9h0M153.3 406.6h0M153.0 394.5h0M131.0 370.4h0M147.7 379.4h0M94.3 431.7h0M193.5 406.6h0M142.0 363.1h0M121.7 413.0h0M140.0 372.9h0M110.4 415.7h0M94.0 414.6h0M100.5 392.6h0M98.5 434.7h0M141.1 437.6h0M116.1 364.1h0M101.8 355.9h0M126.7 441.0h0M122.6 417.5h0M165.5 352.4h0M110.1 367.1h0M153.8 398.4h0M106.5 375.0h0M109.4 398.9h0M114.2 431.4h0M125.7 413.0h0M150.6 436.7h0M118.2 436.4h0M125.1 394.3h0M136.5 429.5h0M138.4 440.3h0M124.7 359.4h0M175.9 441.2h0M118.6 413.7h0M124.9 353.5h0M159.9 366.6h0M116.2 350.9h0M112.4 416.5h0M108.2 351.0h0M169.6 379.0h0M169.7 417.7h0M122.3 374.7h0M183.0 353.6h0M187.9 416.2h0M153.3 401.1h0M149.1 376.4h0M109.7 398.6h0M173.9 381.5h0M102.0 422.5h0M92.8 363.6h0M112.6 360.7h0M111.8 417.3h0M148.4 433.5h0M116.3 364.3h0M147.7 354.1h0M178.6 350.7h0M107.6 434.9h0M172.8 359.2h0M80.7 428.1h0M84.9 383.3h0M88.1 380.6h0M89.5 370.6h0M89.0 420.3h0M90.9 403.6h0M224.0 354.2h0M225.7 359.0h0M227.1 361.7h0M244.9 353.1h0M266.8 354.9h0M277.1 358.3h0M264.7 365.6h0M275.7 365.2h0M273.4 371.3h0M266.8 375.4h0M264.7 380.6h0M270.9 396.3h0M266.8 404.9h0M241.4 370.4h0M231.8 373.4h0M249.0 374.1h0M250.3 372.7h0M243.5 377.5h0M242.8 381.3h0M222.3 378.6h0M230.5 383.4h0M226.4 386.4h0M233.9 390.8h0M222.9 394.6h0M246.2 392.1h0M250.3 388.7h0M256.1 394.3h0M231.2 400.1h0M238.0 402.6h0M227.1 408.6h0M235.5 411.7h0M235.5 418.6h0M228.4 419.7h0M244.2 411.0h0M246.2 413.8h0M249.0 416.5h0M251.0 406.3h0M253.8 409.0h0M256.5 409.7h0M256.5 416.5h0M256.8 424.3h0M254.2 436.4h0M257.9 437.5h0M230.5 430.9h0M231.2 435.0h0M229.8 439.1h0M225.0 432.3h0M220.2 439.1h0M214.7 437.1h0M220.2 433.7h0M215.4 420.0h0M222.3 414.5h0M221.6 416.5h0M218.8 406.3h0M217.5 403.5h0M215.4 362.8h0M215.8 370.0h0M207.9 374.1h0M209.2 385.0h0M212.0 389.8h0M216.1 388.4h0M207.2 441.9h0M209.2 435.0h0M207.9 419.3h0M206.5 406.3h0" stroke="#1a1a30" stroke-width="4.5" stroke-linecap="round" fill="none"/>
<rect x="70" y="346" width="1" height="101" fill="#777c82"/>
<rect x="71" y="346" width="1" height="100" fill="#a0a0a0"/>
<rect x="72" y="445" width="215" height="1" fill="#000" fill-opacity="0.15"/>
<rect x="71" y="446" width="216" height="1" fill="#4a4a4a"/>
<path d="M72.5 446v-2M118.5 446v-2M165.5 446v-2M211.5 446v-2M258.5 446v-2M72 437.5h2M72 418.5h2M72 398.5h2M72 379.5h2M72 359.5h2" stroke="#333" stroke-width="1" fill="none"/>
<text x="72.3" y="461.5" text-anchor="middle" font-size="10.5" fill="#262626">0</text>
<text x="118.8" y="461.5" text-anchor="middle" font-size="10.5" fill="#262626">10</text>
<text x="165.3" y="461.5" text-anchor="middle" font-size="10.5" fill="#262626">20</text>
<text x="211.8" y="461.5" text-anchor="middle" font-size="10.5" fill="#262626">30</text>
<text x="258.3" y="461.5" text-anchor="middle" font-size="10.5" fill="#262626">40</text>
<text x="65.5" y="441.9" text-anchor="end" font-size="10.5" fill="#262626">0</text>
<text x="65.5" y="422.4" text-anchor="end" font-size="10.5" fill="#262626">10</text>
<text x="65.5" y="402.9" text-anchor="end" font-size="10.5" fill="#262626">20</text>
<text x="65.5" y="383.4" text-anchor="end" font-size="10.5" fill="#262626">30</text>
<text x="65.5" y="363.9" text-anchor="end" font-size="10.5" fill="#262626">40</text>
<text x="179.0" y="477.5" text-anchor="middle" font-size="11.55" fill="#262626">EGR [%]</text>
<text transform="translate(47,396.0) rotate(-90)" text-anchor="middle" font-size="11.75" fill="#262626">ex_cam [deg CA]</text>
<rect x="358" y="346" width="215" height="100" fill="#fff"/>
<path d="M365.5 346V446M406.5 346V446M447.5 346V446M488.5 346V446M529.5 346V446M570.5 346V446M358 441.5H573M358 395.5H573M358 350.5H573" stroke="#e3e3e3" stroke-width="1" fill="none"/>
<path d="M368.3 350.2h0M369.3 350.2h0M370.3 350.2h0M371.2 350.2h0M372.2 350.2h0M373.2 350.2h0M374.2 350.2h0M375.1 350.2h0M376.1 350.2h0M377.1 350.2h0M378.1 350.2h0M379.1 350.2h0M380.0 350.2h0M381.0 350.2h0M382.0 350.2h0M383.0 350.2h0M383.9 350.2h0M384.9 350.2h0M385.9 350.2h0M386.9 350.2h0M387.8 350.2h0M388.8 350.2h0M389.8 350.2h0M390.8 350.2h0M391.8 350.2h0M392.7 350.2h0M393.7 350.2h0M394.7 350.2h0M395.7 350.2h0M396.6 350.2h0M397.6 350.2h0M398.6 350.2h0M399.6 350.2h0M400.6 350.2h0M401.5 350.2h0M402.5 350.2h0M403.5 350.2h0M404.5 350.2h0M405.4 350.2h0M406.4 350.2h0M407.4 350.2h0M408.4 350.2h0M409.4 350.2h0M410.3 350.2h0M411.3 350.2h0M412.3 350.2h0M413.3 350.2h0M414.2 350.2h0M415.2 350.2h0M416.2 350.2h0M417.2 350.2h0M418.1 350.2h0M419.1 350.2h0M420.1 350.2h0M421.1 350.2h0M422.1 350.2h0M423.0 350.2h0M424.0 350.2h0M425.0 350.2h0M426.0 350.2h0M426.9 350.2h0M427.9 350.2h0M428.9 350.2h0M429.9 350.2h0M430.9 350.2h0M431.8 350.2h0M432.8 350.2h0M433.8 350.2h0M434.8 350.2h0M435.7 350.2h0M436.7 350.2h0M437.7 350.2h0M438.7 350.2h0M439.6 350.2h0M440.6 350.2h0M441.6 350.2h0M442.6 350.2h0M443.6 350.2h0M444.5 350.2h0M445.5 350.2h0M446.5 350.2h0M447.5 350.2h0M448.4 350.2h0M449.4 350.2h0M450.4 350.2h0M451.4 350.2h0M452.4 350.2h0M453.3 350.2h0M454.3 350.2h0M455.3 350.2h0M456.3 350.2h0M457.2 350.2h0M458.2 350.2h0M459.2 350.2h0M460.2 350.2h0M461.2 350.2h0M462.1 350.2h0M463.1 350.2h0M464.1 350.2h0M465.1 350.2h0M466.0 350.2h0M467.0 350.2h0M468.0 350.2h0M469.0 350.2h0M469.9 350.2h0M470.9 350.2h0M471.9 350.2h0M472.9 350.2h0M473.9 350.2h0M474.8 350.2h0M475.8 350.2h0M476.8 350.2h0M477.8 350.2h0M478.7 350.2h0M479.7 350.2h0M480.7 350.2h0M481.7 350.2h0M482.7 350.2h0M483.6 350.2h0M484.6 350.2h0M485.6 350.2h0M486.6 350.2h0M487.5 350.2h0M488.5 350.2h0M489.5 350.2h0M490.5 350.2h0M491.5 350.2h0M492.4 350.2h0M493.4 350.2h0M494.4 350.2h0M495.4 350.2h0M496.3 350.2h0M497.3 350.2h0M498.3 350.2h0M499.3 350.2h0M500.2 350.2h0M501.2 350.2h0M502.2 350.2h0M503.2 350.2h0M504.2 350.2h0M505.1 350.2h0M506.1 350.2h0M507.1 350.2h0M508.1 350.2h0M509.0 350.2h0M510.0 350.2h0M511.0 350.2h0M512.0 350.2h0M513.0 350.2h0M513.9 350.2h0M514.9 350.2h0M515.9 350.2h0M516.9 350.2h0M517.8 350.2h0M518.8 350.2h0M519.8 350.2h0M520.8 350.2h0M521.7 350.2h0M522.7 350.2h0M523.7 350.2h0M524.7 350.2h0M525.7 350.2h0M526.6 350.2h0M527.6 350.2h0M528.6 350.2h0M529.6 350.2h0M530.5 350.2h0M531.5 350.2h0M532.5 350.2h0M533.5 350.2h0M534.5 350.2h0M535.4 350.2h0M536.4 350.2h0M537.4 350.2h0M538.4 350.2h0M539.3 350.2h0M540.3 350.2h0M541.3 350.2h0M542.3 350.2h0M543.3 350.2h0M544.2 350.2h0M545.2 350.2h0M546.2 350.2h0M547.2 350.2h0M548.1 350.2h0M549.1 350.2h0M550.1 350.2h0M551.1 350.2h0M552.0 350.2h0M553.0 350.2h0M554.0 350.2h0M555.0 350.2h0M556.0 350.2h0M556.9 350.2h0M557.9 350.2h0M558.9 350.2h0M559.9 350.2h0M560.8 350.2h0M561.8 350.2h0M562.8 350.2h0M367.3 441.4h0M368.2 441.4h0M369.2 441.4h0M370.1 441.4h0M371.1 441.4h0M372.0 441.4h0M372.9 441.4h0M373.9 441.4h0M374.8 441.4h0M375.8 441.4h0M376.7 441.4h0M377.7 441.4h0M378.6 441.4h0M379.5 441.4h0M380.5 441.4h0M381.4 441.4h0M382.4 441.4h0M383.3 441.4h0M384.2 441.4h0M385.2 441.4h0M386.1 441.4h0M387.1 441.4h0M388.0 441.4h0M388.9 441.4h0M389.9 441.4h0M390.8 441.4h0M391.8 441.4h0M392.7 441.4h0M393.7 441.4h0M394.6 441.4h0M395.5 441.4h0M396.5 441.4h0M397.4 441.4h0M398.4 441.4h0M399.3 441.4h0M400.2 441.4h0M401.2 441.4h0M402.1 441.4h0M403.1 441.4h0M404.0 441.4h0M404.9 441.4h0M405.9 441.4h0M406.8 441.4h0M407.8 441.4h0M408.7 441.4h0M409.7 441.4h0M410.6 441.4h0M411.5 441.4h0M412.5 441.4h0M413.4 441.4h0M414.4 441.4h0M415.3 441.4h0M416.2 441.4h0M417.2 441.4h0M418.1 441.4h0M419.1 441.4h0M420.0 441.4h0M420.9 441.4h0M421.9 441.4h0M422.8 441.4h0M423.8 441.4h0M424.7 441.4h0M425.7 441.4h0M426.6 441.4h0M427.5 441.4h0M428.5 441.4h0M429.4 441.4h0M430.4 441.4h0M431.3 441.4h0M432.2 441.4h0M433.2 441.4h0M434.1 441.4h0M435.1 441.4h0M436.0 441.4h0M436.9 441.4h0M437.9 441.4h0M438.8 441.4h0M439.8 441.4h0M440.7 441.4h0M441.7 441.4h0M442.6 441.4h0M443.5 441.4h0M444.5 441.4h0M445.4 441.4h0M446.4 441.4h0M447.3 441.4h0M448.2 441.4h0M449.2 441.4h0M450.1 441.4h0M451.1 441.4h0M452.0 441.4h0M452.9 441.4h0M453.9 441.4h0M454.8 441.4h0M455.8 441.4h0M456.7 441.4h0M457.7 441.4h0M458.6 441.4h0M459.5 441.4h0M460.5 441.4h0M461.4 441.4h0M462.4 441.4h0M463.3 441.4h0M464.2 441.4h0M465.2 441.4h0M466.1 441.4h0M467.1 441.4h0M468.0 441.4h0M469.0 441.4h0M469.9 441.4h0M470.8 441.4h0M471.8 441.4h0M472.7 441.4h0M473.7 441.4h0M474.6 441.4h0M475.5 441.4h0M476.5 441.4h0M477.4 441.4h0M478.4 441.4h0M479.3 441.4h0M480.2 441.4h0M481.2 441.4h0M482.1 441.4h0M483.1 441.4h0M484.0 441.4h0M485.0 441.4h0M485.9 441.4h0M486.8 441.4h0M487.8 441.4h0M488.7 441.4h0M489.7 441.4h0M490.6 441.4h0M491.5 441.4h0M492.5 441.4h0M493.4 441.4h0M494.4 441.4h0M495.3 441.4h0M496.2 441.4h0M497.2 441.4h0M498.1 441.4h0M499.1 441.4h0M500.0 441.4h0M501.0 441.4h0M501.9 441.4h0M502.8 441.4h0M503.8 441.4h0M504.7 441.4h0M505.7 441.4h0M506.6 441.4h0M507.5 441.4h0M508.5 441.4h0M509.4 441.4h0M510.4 441.4h0M511.3 441.4h0M512.2 441.4h0M513.2 441.4h0M514.1 441.4h0M515.1 441.4h0M516.0 441.4h0M517.0 441.4h0M517.9 441.4h0M518.8 441.4h0M519.8 441.4h0M520.7 441.4h0M521.7 441.4h0M522.6 441.4h0M523.5 441.4h0M524.5 441.4h0M525.4 441.4h0M526.4 441.4h0M527.3 441.4h0M528.2 441.4h0M529.2 441.4h0M530.1 441.4h0M531.1 441.4h0M532.0 441.4h0M533.0 441.4h0M533.9 441.4h0M534.8 441.4h0M535.8 441.4h0M536.7 441.4h0M537.7 441.4h0M538.6 441.4h0M539.5 441.4h0M540.5 441.4h0M541.4 441.4h0M542.4 441.4h0M543.3 441.4h0M544.2 441.4h0M545.2 441.4h0M546.1 441.4h0M547.1 441.4h0M548.0 441.4h0M549.0 441.4h0M549.9 441.4h0M550.8 441.4h0M551.8 441.4h0M552.7 441.4h0M553.7 441.4h0M554.6 441.4h0M561.4 441.4h0" stroke="#1a1a30" stroke-width="4.5" stroke-linecap="round" fill="none"/>
<rect x="356" y="346" width="1" height="101" fill="#777c82"/>
<rect x="357" y="346" width="1" height="100" fill="#a0a0a0"/>
<rect x="358" y="445" width="215" height="1" fill="#000" fill-opacity="0.15"/>
<rect x="357" y="446" width="216" height="1" fill="#4a4a4a"/>
<path d="M365.5 446v-2M406.5 446v-2M447.5 446v-2M488.5 446v-2M529.5 446v-2M570.5 446v-2M358 441.5h2M358 395.5h2M358 350.5h2" stroke="#333" stroke-width="1" fill="none"/>
<text x="365.0" y="461.5" text-anchor="middle" font-size="10.5" fill="#262626">-50</text>
<text x="406.15999999999997" y="461.5" text-anchor="middle" font-size="10.5" fill="#262626">-40</text>
<text x="447.31999999999994" y="461.5" text-anchor="middle" font-size="10.5" fill="#262626">-30</text>
<text x="488.47999999999996" y="461.5" text-anchor="middle" font-size="10.5" fill="#262626">-20</text>
<text x="529.64" y="461.5" text-anchor="middle" font-size="10.5" fill="#262626">-10</text>
<text x="570.8" y="461.5" text-anchor="middle" font-size="10.5" fill="#262626">0</text>
<text x="351.5" y="445.4" text-anchor="end" font-size="10.5" fill="#262626">0</text>
<text x="351.5" y="399.79999999999995" text-anchor="end" font-size="10.5" fill="#262626">0.5</text>
<text x="351.5" y="354.2" text-anchor="end" font-size="10.5" fill="#262626">1</text>
<text x="465.0" y="477.5" text-anchor="middle" font-size="11.55" fill="#262626">in_cam [deg CA]</text>
<text transform="translate(329,396.0) rotate(-90)" text-anchor="middle" font-size="11.75" fill="#262626">SCV [-]</text>
<rect x="644" y="346" width="215" height="100" fill="#fff"/>
<path d="M645.5 346V446M720.5 346V446M795.5 346V446M644 442.5H859M644 414.5H859M644 386.5H859M644 358.5H859" stroke="#e3e3e3" stroke-width="1" fill="none"/>
<path d="M677.4 436.3h0M699.2 438.7h0M726.4 438.5h0M659.7 436.8h0M787.9 439.5h0M754.1 440.6h0M802.7 441.0h0M750.7 441.6h0M653.4 436.4h0M741.9 438.9h0M687.9 441.7h0M698.5 435.7h0M734.5 438.9h0M675.9 439.3h0M681.6 440.8h0M791.2 436.7h0M768.8 437.6h0M765.2 437.7h0M763.0 439.9h0M792.8 439.5h0M704.5 440.8h0M763.4 439.4h0M696.8 438.1h0M682.9 436.0h0M675.6 441.3h0M774.8 439.7h0M668.5 437.5h0M706.9 436.9h0M794.3 435.9h0M772.6 438.7h0M792.8 437.0h0M692.1 440.0h0M689.8 436.1h0M740.6 436.3h0M673.7 441.4h0M697.4 440.4h0M803.1 437.5h0M778.8 439.1h0M703.7 438.7h0M708.2 439.8h0M655.3 439.7h0M729.4 440.6h0M799.5 437.9h0M662.9 440.0h0M776.2 436.0h0M707.1 440.2h0M672.3 439.6h0M728.7 438.7h0M724.1 436.4h0M769.0 438.2h0M700.0 440.6h0M769.6 440.2h0M669.7 440.5h0M652.6 439.9h0M749.3 436.7h0M738.0 436.1h0M790.0 440.7h0M717.1 438.6h0M686.6 436.4h0M689.0 436.3h0M774.6 439.6h0M693.0 436.1h0M681.8 437.2h0M789.1 441.3h0M738.4 438.3h0M744.0 440.5h0M675.3 436.0h0M733.8 437.5h0M699.4 436.1h0M744.5 437.3h0M760.8 440.0h0M661.2 441.3h0M675.3 439.1h0M789.9 439.5h0M758.8 440.6h0M666.7 441.0h0M692.9 438.7h0M759.7 439.3h0M691.1 438.6h0M710.5 439.1h0M761.1 435.9h0M793.6 441.6h0M713.1 436.9h0M739.0 437.2h0M765.5 440.7h0M742.5 440.0h0M695.1 441.0h0M777.2 439.0h0M667.1 439.0h0M737.6 440.8h0M683.1 439.6h0M731.4 440.5h0M796.9 438.7h0M668.2 437.1h0M677.9 439.8h0M735.1 441.4h0M766.4 435.7h0M729.3 437.6h0M688.4 439.2h0M785.7 438.9h0M672.4 436.3h0M721.5 437.8h0M748.8 441.2h0M712.4 441.0h0M757.1 437.0h0M771.5 436.3h0M663.7 439.2h0M771.6 440.6h0M695.7 436.2h0M768.2 439.6h0M665.4 436.6h0M709.0 439.4h0M670.7 439.6h0M765.4 435.6h0M681.0 438.1h0M782.1 436.6h0M707.2 437.7h0M659.9 438.6h0M785.7 437.6h0M752.8 438.0h0M784.2 440.9h0M661.9 437.6h0M704.4 435.6h0M761.5 436.4h0M766.5 439.9h0M715.1 436.9h0M780.8 440.9h0M664.2 437.8h0M733.2 437.7h0M782.8 436.4h0M798.0 440.4h0M712.6 438.0h0M679.6 438.9h0M724.9 437.4h0M701.5 439.3h0M716.1 440.7h0M783.3 438.9h0M749.1 438.3h0M714.7 441.3h0M779.0 437.5h0M663.9 441.5h0M658.5 436.8h0M670.7 440.5h0M746.0 438.8h0M722.9 437.8h0M798.2 437.0h0M711.1 437.3h0M795.3 438.1h0M745.3 441.6h0M702.4 437.0h0M686.4 440.5h0M727.2 440.7h0M694.5 438.7h0M757.5 437.7h0M701.2 441.7h0M725.6 441.3h0M719.8 436.2h0M683.8 440.2h0M755.7 435.7h0M736.9 438.1h0M773.3 437.4h0M780.8 438.1h0M751.1 438.8h0M685.3 438.7h0M656.6 435.8h0M794.3 439.8h0M723.1 440.2h0M800.8 441.6h0M719.0 440.5h0M776.5 440.1h0M779.6 428.5h0M712.5 436.8h0M749.6 426.2h0M798.0 430.4h0M714.7 423.2h0M774.5 428.8h0M696.7 423.5h0M734.4 424.1h0M655.3 431.9h0M735.4 424.9h0M787.8 430.2h0M709.9 430.1h0M687.3 429.6h0M727.2 435.1h0M747.4 432.0h0M674.5 424.0h0M693.7 426.9h0M790.2 432.7h0M790.4 424.0h0M658.5 433.1h0M759.4 423.7h0M770.2 423.3h0M728.2 429.7h0M678.2 434.1h0M684.9 424.3h0M771.1 425.3h0M705.4 428.5h0M682.7 432.3h0M746.5 431.0h0M781.8 435.9h0M768.8 432.3h0M696.8 426.5h0M683.5 435.3h0M697.6 430.7h0M670.2 426.7h0M705.6 436.4h0M678.8 425.3h0M759.9 432.3h0M721.4 424.6h0M657.9 432.9h0M766.4 424.5h0M752.6 430.4h0M782.7 426.1h0M706.6 435.2h0M702.3 423.3h0M669.3 431.6h0M706.6 428.8h0M772.4 436.7h0M750.0 436.8h0M652.1 437.0h0M792.4 436.5h0M799.7 433.0h0M686.3 425.5h0M730.9 436.0h0M696.3 436.6h0M768.5 430.9h0M781.5 436.3h0M777.7 426.1h0M657.8 433.5h0M785.8 437.0h0M670.1 425.4h0M726.5 434.6h0M801.0 436.4h0M764.0 431.9h0M731.7 426.1h0M791.2 426.9h0M740.7 435.5h0M676.6 437.0h0M717.3 424.9h0M695.3 437.0h0M766.0 431.8h0M675.1 434.8h0M708.4 428.2h0M653.1 435.9h0M743.9 432.7h0M695.4 431.8h0M749.1 429.8h0M678.9 427.5h0M654.9 433.3h0M701.1 432.3h0M797.5 423.6h0M721.9 430.3h0M756.5 435.9h0M666.5 434.1h0M712.2 428.7h0M655.2 435.5h0M744.2 423.1h0M672.0 435.0h0M796.5 436.6h0M743.7 431.4h0M797.1 432.4h0M801.9 430.9h0M685.1 430.1h0M796.2 434.6h0M754.7 436.7h0M685.8 435.0h0M778.4 432.2h0M692.6 434.9h0M713.0 426.5h0M779.9 424.0h0M767.4 437.0h0M679.7 426.2h0M726.0 434.0h0M792.8 430.5h0M766.5 423.3h0M765.1 432.4h0M742.0 437.0h0M788.9 433.2h0M696.5 435.6h0M678.0 436.5h0M679.0 429.3h0M700.8 430.9h0M798.6 429.8h0M790.6 435.0h0M787.3 433.9h0M676.0 424.5h0M786.2 431.2h0M692.7 430.1h0M683.2 423.7h0M654.3 437.0h0M776.6 427.7h0M792.2 435.8h0M714.1 433.9h0M654.4 425.3h0M652.3 423.6h0M657.3 426.9h0M758.8 436.6h0M672.6 434.2h0M691.2 431.1h0M682.5 437.0h0M687.6 437.0h0M712.3 431.8h0M676.3 424.1h0M786.6 435.7h0M684.9 436.1h0M685.8 426.2h0M755.6 424.0h0M748.0 424.9h0M795.0 431.4h0M655.6 432.3h0M699.3 428.0h0M763.7 436.9h0M787.3 430.3h0M709.9 437.0h0M778.1 436.5h0M700.1 436.9h0M707.9 425.8h0M729.4 435.7h0M739.0 432.7h0M736.5 428.8h0M745.0 434.1h0M662.9 423.9h0M793.5 436.1h0M712.4 436.1h0M793.4 435.0h0M711.4 431.3h0M662.2 436.9h0M769.2 434.4h0M725.6 433.7h0M671.1 432.9h0M719.1 435.9h0M758.3 434.6h0M666.9 436.9h0M758.9 436.8h0M696.9 433.3h0M724.8 436.0h0M803.0 427.4h0M758.4 426.3h0M735.6 430.9h0M750.3 437.0h0M668.2 419.9h0M670.5 424.1h0M669.1 420.7h0M668.8 427.4h0M670.1 425.5h0M668.6 436.7h0M667.6 416.1h0M668.8 433.1h0M665.4 426.1h0M669.3 426.8h0M665.8 423.7h0M669.8 418.8h0M667.5 420.6h0M669.1 430.7h0M665.9 416.8h0M670.4 422.9h0M669.0 425.5h0M667.4 435.8h0M667.9 420.3h0M671.1 433.0h0M665.4 428.0h0M666.1 416.2h0M671.1 419.9h0M666.2 434.6h0M670.4 418.9h0M759.0 423.8h0M707.7 422.9h0M768.0 430.3h0M699.1 419.9h0M784.0 432.6h0M719.0 432.6h0M732.9 426.2h0M699.5 416.9h0M718.2 423.3h0M754.6 421.2h0M723.7 430.1h0M706.0 427.2h0M719.1 429.4h0M738.0 431.1h0M746.2 430.8h0M735.1 423.8h0M696.0 430.7h0M722.8 419.9h0M752.8 425.9h0M748.8 421.6h0M765.4 430.6h0M717.7 425.5h0M723.7 423.0h0M781.1 429.4h0M762.7 423.2h0M742.3 426.2h0M719.2 419.0h0M700.0 431.0h0M761.2 421.9h0M713.3 428.0h0M719.7 422.7h0M717.3 419.2h0M726.4 426.6h0M702.8 430.6h0M694.2 418.5h0M729.9 431.0h0M714.8 426.1h0M751.4 429.6h0M696.3 424.6h0M770.8 422.9h0M748.4 426.6h0M714.9 430.6h0M720.7 425.6h0M776.3 430.5h0M705.4 426.4h0M754.3 417.6h0M745.3 430.7h0M767.6 432.7h0M657.3 432.5h0M655.3 434.6h0M658.5 426.0h0M653.7 428.2h0M660.7 428.4h0M652.7 425.7h0M661.1 435.2h0M654.2 434.4h0M660.2 431.2h0M661.4 429.4h0M655.3 433.1h0M657.9 433.6h0M657.3 431.7h0M660.8 427.5h0M658.7 431.0h0M654.3 435.5h0M657.2 431.7h0M657.6 435.2h0M660.0 424.9h0M653.4 426.2h0M683.5 417.1h0M675.5 428.1h0M676.5 421.1h0M680.1 418.1h0M678.5 417.0h0M680.1 415.6h0M682.5 432.9h0M679.1 432.0h0M685.3 427.0h0M682.7 434.4h0M685.1 433.8h0M675.6 432.7h0M677.3 421.1h0M678.5 418.1h0M681.4 434.6h0M676.5 430.7h0M681.3 430.2h0M683.2 416.0h0M679.9 430.3h0M685.7 421.8h0M683.5 414.3h0M684.6 421.1h0M682.7 427.1h0M678.3 430.9h0M683.4 424.6h0M677.4 421.9h0M678.5 432.2h0M678.1 427.9h0M681.1 425.6h0M678.0 419.5h0M675.5 435.4h0M675.6 415.7h0M679.2 418.1h0M675.4 422.3h0M677.4 422.5h0M680.9 431.4h0M685.3 434.3h0M684.6 417.8h0M677.3 413.5h0M685.6 433.9h0M677.4 417.2h0M685.1 429.2h0M675.5 422.1h0M678.6 430.7h0M677.7 416.4h0M687.5 431.3h0M690.1 422.5h0M688.2 435.0h0M687.3 427.5h0M687.2 432.0h0M690.7 423.8h0M696.0 416.1h0M687.1 417.4h0M691.9 431.7h0M691.0 430.0h0M689.3 431.1h0M689.2 417.6h0M689.3 422.3h0M689.9 420.0h0M687.3 427.8h0M689.6 424.6h0M696.2 424.4h0M688.2 423.0h0M688.0 424.7h0M689.5 431.4h0M695.5 416.4h0M691.8 434.3h0M686.4 429.1h0M690.9 431.2h0M693.0 433.8h0M691.6 423.5h0M688.1 434.0h0M697.1 432.2h0M696.4 428.1h0M686.9 418.4h0M753.7 427.9h0M715.2 416.1h0M760.9 426.4h0M737.3 418.1h0M718.1 417.1h0M744.6 419.6h0M722.2 424.4h0M684.7 419.0h0M749.7 425.5h0M744.2 420.1h0M679.0 424.6h0M761.9 423.8h0M688.4 426.5h0M751.8 426.7h0M750.5 419.3h0M656.7 425.4h0M705.5 426.9h0M751.0 427.5h0M713.8 427.8h0M710.7 419.5h0M681.4 417.9h0M703.4 418.4h0M719.3 425.4h0M684.9 415.5h0M757.4 426.9h0M676.7 418.6h0M719.3 427.8h0M729.6 426.2h0M708.7 426.1h0M724.6 422.3h0M748.1 417.8h0M676.2 419.0h0M727.8 417.2h0M750.1 428.2h0M754.7 420.0h0M768.0 421.2h0M684.3 423.0h0M752.3 427.3h0M788.9 427.6h0M758.5 423.0h0M677.4 425.6h0M711.2 422.8h0M750.9 425.6h0M730.3 416.5h0M784.5 428.2h0M751.6 426.4h0M747.9 426.9h0M686.3 418.0h0M655.0 426.6h0M730.8 419.9h0M703.8 414.1h0M759.5 417.3h0M689.5 423.3h0M692.6 427.2h0M697.5 421.1h0M713.6 423.7h0M684.5 417.0h0M666.2 428.4h0M721.9 421.4h0M692.3 422.1h0M660.8 425.3h0M706.9 427.9h0M755.7 427.9h0M756.1 416.1h0M721.1 420.6h0M654.1 404.1h0M669.5 397.5h0M668.1 408.5h0M668.1 415.3h0M668.1 421.8h0M691.4 404.4h0M691.8 406.0h0M696.2 409.5h0M699.2 398.9h0M702.3 406.7h0M704.4 393.8h0M706.0 404.4h0M707.8 396.8h0M714.0 388.9h0M715.3 400.3h0M721.9 389.3h0M720.5 395.5h0M725.6 385.2h0M726.0 408.5h0M726.0 411.2h0M734.2 404.0h0M740.0 375.6h0M743.0 398.9h0M743.8 407.1h0M748.9 396.2h0M797.7 349.9h0M753.6 367.4h0M766.5 371.9h0M793.9 377.9h0M802.5 377.3h0M756.0 385.2h0M760.8 390.3h0M764.6 388.4h0M749.8 396.2h0M763.2 395.8h0M773.8 393.2h0M840.9 390.4h0M821.7 396.2h0M823.5 403.3h0M834.7 405.8h0M849.1 407.1h0M829.9 414.7h0M824.5 417.4h0M817.2 417.0h0M809.4 416.7h0M811.7 427.4h0M818.3 424.9h0M823.8 424.7h0M825.8 429.7h0M827.2 434.5h0M828.6 438.6h0M835.0 437.5h0M752.5 407.1h0M751.2 411.2h0M758.7 411.2h0M763.5 413.3h0M765.1 408.1h0M785.7 406.4h0M788.6 407.8h0M779.2 414.7h0M786.1 415.1h0M807.3 435.9h0M812.1 437.0h0M816.2 438.6h0M796.4 423.6h0M806.6 427.7h0" stroke="#1a1a30" stroke-width="4.5" stroke-linecap="round" fill="none"/>
<rect x="642" y="346" width="1" height="101" fill="#777c82"/>
<rect x="643" y="346" width="1" height="100" fill="#a0a0a0"/>
<rect x="644" y="445" width="215" height="1" fill="#000" fill-opacity="0.15"/>
<rect x="643" y="446" width="216" height="1" fill="#4a4a4a"/>
<path d="M645.5 446v-2M720.5 446v-2M795.5 446v-2M644 442.5h2M644 414.5h2M644 386.5h2M644 358.5h2" stroke="#333" stroke-width="1" fill="none"/>
<text x="645.3" y="461.5" text-anchor="middle" font-size="10.5" fill="#262626">0</text>
<text x="720.55" y="461.5" text-anchor="middle" font-size="10.5" fill="#262626">5</text>
<text x="795.8" y="461.5" text-anchor="middle" font-size="10.5" fill="#262626">10</text>
<text x="637.5" y="446.6" text-anchor="end" font-size="10.5" fill="#262626">0</text>
<text x="637.5" y="418.70000000000005" text-anchor="end" font-size="10.5" fill="#262626">20</text>
<text x="637.5" y="390.8" text-anchor="end" font-size="10.5" fill="#262626">40</text>
<text x="637.5" y="362.90000000000003" text-anchor="end" font-size="10.5" fill="#262626">60</text>
<text x="751.0" y="477.5" text-anchor="middle" font-size="11.55" fill="#262626">Fuel_mass [kg/h]</text>
<text transform="translate(619,396.0) rotate(-90)" text-anchor="middle" font-size="11.75" fill="#262626">CoV [%]</text>
<rect x="72" y="557" width="215" height="100" fill="#fff"/>
<path d="M80.5 557V657M117.5 557V657M153.5 557V657M190.5 557V657M226.5 557V657M263.5 557V657M72 652.5H287M72 619.5H287M72 585.5H287" stroke="#e3e3e3" stroke-width="1" fill="none"/>
<path d="M99.8 649.5h0M86.9 641.7h0M80.9 622.2h0M102.6 642.2h0M94.5 624.2h0M87.4 650.1h0M87.2 648.1h0M88.2 605.5h0M102.6 644.7h0M92.7 611.8h0M87.9 628.5h0M86.0 622.4h0M98.7 627.3h0M96.0 626.0h0M86.9 622.6h0M98.5 628.2h0M85.4 648.5h0M89.7 629.0h0M92.0 651.0h0M91.4 623.7h0M88.5 616.7h0M91.5 648.3h0M92.4 636.6h0M88.7 629.8h0M80.7 609.8h0M81.5 626.3h0M102.5 645.5h0M97.8 634.7h0M81.9 625.6h0M85.0 650.7h0M94.9 621.1h0M93.5 612.5h0M88.0 643.1h0M90.4 632.6h0M93.2 638.8h0M91.6 649.9h0M83.3 647.5h0M87.2 632.4h0M103.3 647.4h0M85.2 633.4h0M101.8 651.6h0M88.9 629.5h0M82.1 630.8h0M90.2 626.4h0M92.6 614.1h0M97.4 636.6h0M94.2 617.8h0M103.5 646.7h0M83.3 596.9h0M83.3 606.5h0M83.1 636.2h0M86.3 620.0h0M102.1 641.3h0M96.9 619.6h0M86.9 606.1h0M99.3 649.8h0M97.8 632.3h0M101.1 638.7h0M92.7 607.8h0M84.4 601.4h0M86.6 629.5h0M93.2 622.3h0M81.6 632.0h0M90.1 618.7h0M99.7 634.9h0M90.9 642.8h0M87.6 643.8h0M97.5 635.3h0M97.1 618.5h0M82.7 609.5h0M98.9 638.8h0M90.4 617.9h0M96.2 627.8h0M95.5 625.7h0M101.6 641.2h0M95.7 628.3h0M89.0 645.0h0M83.3 622.0h0M98.3 627.4h0M88.5 623.8h0M83.1 625.2h0M85.0 621.6h0M87.8 616.1h0M99.5 635.9h0M82.7 632.7h0M91.5 642.0h0M83.6 635.1h0M89.2 638.4h0M102.2 631.4h0M85.3 629.7h0M82.5 644.7h0M99.8 639.6h0M94.4 621.7h0M89.9 632.5h0M101.6 648.6h0M87.6 631.9h0M87.1 604.8h0M90.3 632.7h0M98.0 638.4h0M81.6 651.7h0M88.3 615.0h0M101.1 630.3h0M80.9 600.9h0M85.5 600.1h0M100.4 644.9h0M103.2 643.4h0M82.5 615.6h0M98.0 619.2h0M99.8 645.2h0M80.9 651.7h0M101.2 621.4h0M90.6 636.2h0M100.8 631.8h0M96.3 644.9h0M85.6 647.3h0M83.1 646.2h0M95.6 626.1h0M85.0 603.4h0M81.3 610.2h0M99.6 644.5h0M99.5 634.7h0M103.8 641.5h0M82.4 640.2h0M103.8 629.9h0M81.2 634.5h0M85.3 648.9h0M92.7 631.5h0M81.1 642.1h0M100.6 632.0h0M102.0 633.0h0M94.5 631.1h0M97.7 628.0h0M82.4 612.2h0M90.0 605.2h0M90.8 623.2h0M88.2 650.8h0M93.8 616.1h0M86.9 624.9h0M84.1 648.4h0M93.8 636.0h0M87.9 618.7h0M87.3 603.2h0M103.3 624.1h0M85.7 631.2h0M82.1 615.8h0M103.3 651.3h0M80.8 619.7h0M90.0 631.7h0M102.4 627.3h0M98.5 629.8h0M89.1 635.4h0M87.6 625.9h0M97.3 613.0h0M102.4 642.8h0M93.6 644.7h0M91.3 616.4h0M94.9 633.7h0M95.3 633.9h0M93.0 627.1h0M93.6 622.7h0M81.5 621.6h0M87.2 650.8h0M97.0 650.7h0M98.2 633.4h0M85.9 619.4h0M95.9 626.5h0M87.5 642.1h0M83.1 626.7h0M88.2 622.3h0M87.7 621.6h0M104.0 630.9h0M83.5 608.8h0M86.0 624.7h0M100.6 631.4h0M99.9 621.9h0M101.5 632.9h0M86.9 633.9h0M87.9 606.1h0M102.2 642.4h0M80.7 622.4h0M97.6 630.4h0M97.1 628.1h0M104.2 643.0h0M95.1 627.9h0M82.8 616.0h0M82.9 613.9h0M88.0 640.1h0M89.4 640.8h0M83.7 633.6h0M94.3 642.6h0M82.7 613.5h0M83.6 642.2h0M91.9 627.3h0M92.5 637.1h0M102.2 635.9h0M85.3 649.2h0M98.1 629.1h0M101.2 631.6h0M96.1 615.4h0M89.6 641.9h0M88.5 644.9h0M91.6 624.6h0M86.9 619.3h0M96.8 634.7h0M89.1 614.1h0M92.5 609.0h0M84.1 632.3h0M94.9 643.5h0M91.1 617.0h0M84.8 646.9h0M90.7 649.1h0M80.5 637.9h0M81.5 620.9h0M93.4 622.9h0M91.3 618.2h0M87.7 608.3h0M87.7 616.5h0M92.6 608.7h0M103.3 624.9h0M81.6 604.4h0M94.7 616.7h0M85.3 638.8h0M85.2 624.3h0M87.8 613.7h0M93.1 613.1h0M85.8 606.2h0M100.0 634.3h0M90.1 619.1h0M84.9 628.5h0M84.2 631.3h0M80.5 615.7h0M98.7 651.3h0M82.6 620.8h0M101.1 627.1h0M99.5 631.5h0M87.3 618.8h0M97.3 633.1h0M102.8 627.8h0M96.1 615.6h0M80.7 637.9h0M83.0 613.2h0M94.2 642.9h0M101.5 623.8h0M96.3 646.4h0M100.2 625.4h0M85.0 636.9h0M102.7 645.6h0M81.9 625.3h0M92.3 637.1h0M86.3 642.9h0M91.0 627.3h0M102.8 633.2h0M92.5 628.3h0M91.7 638.6h0M94.6 631.9h0M99.4 641.8h0M92.6 622.1h0M101.1 643.8h0M95.7 614.5h0M88.2 621.7h0M90.7 615.6h0M103.4 638.3h0M86.7 631.0h0M95.0 646.8h0M84.2 643.5h0M99.8 622.6h0M92.6 619.2h0M83.8 641.6h0M95.6 613.8h0M90.3 623.6h0M97.6 622.2h0M82.9 610.8h0M87.4 623.6h0M97.5 620.8h0M101.1 636.5h0M88.9 614.0h0M91.2 621.4h0M96.2 634.1h0M89.5 623.2h0M101.2 637.8h0M97.3 620.6h0M90.9 629.9h0M98.6 648.7h0M101.0 646.9h0M98.0 644.9h0M92.4 619.8h0M95.1 620.4h0M81.5 619.6h0M103.4 635.7h0M86.3 609.2h0M85.8 651.3h0M92.4 650.1h0M87.3 628.2h0M83.2 617.6h0M80.8 619.5h0M81.4 603.8h0M89.1 623.2h0M101.0 635.0h0M95.4 642.0h0M88.6 604.6h0M81.5 637.6h0M88.7 638.8h0M86.2 634.3h0M82.4 634.7h0M97.3 642.2h0M82.3 650.3h0M96.4 651.4h0M82.4 638.0h0M93.2 630.5h0M95.4 642.0h0M90.6 640.0h0M98.5 630.8h0M89.3 650.7h0M88.1 646.9h0M89.7 647.1h0M84.6 647.0h0M90.4 629.3h0M98.5 637.6h0M84.0 633.9h0M91.1 637.2h0M84.4 634.3h0M82.3 646.0h0M93.2 640.6h0M94.9 646.1h0M85.8 645.9h0M90.7 649.0h0M95.8 643.3h0M84.2 641.8h0M89.9 639.3h0M90.8 642.7h0M92.6 646.1h0M90.5 645.6h0M94.1 637.8h0M96.9 637.5h0M96.6 639.6h0M93.8 644.3h0M92.3 634.2h0M89.2 634.3h0M86.8 641.3h0M84.6 632.5h0M91.0 634.4h0M91.6 641.6h0M86.2 644.4h0M98.3 640.8h0M96.9 646.4h0M94.3 642.6h0M98.7 634.1h0M85.8 639.4h0M97.4 636.0h0M92.0 648.2h0M87.4 645.3h0M84.0 636.5h0M81.1 633.6h0M88.3 630.5h0M87.1 639.2h0M97.7 644.1h0M94.7 635.3h0M86.6 642.1h0M98.2 645.1h0M95.1 648.3h0M94.9 638.3h0M93.1 648.5h0M94.5 631.0h0M87.4 647.0h0M98.7 650.5h0M91.8 650.8h0M95.1 629.4h0M89.7 644.1h0M95.6 641.2h0M96.7 636.1h0M82.2 631.7h0M83.9 650.3h0M81.6 634.9h0M96.4 649.2h0M98.5 638.1h0M84.8 651.1h0M81.9 647.8h0M97.3 650.2h0M89.4 635.9h0M81.4 629.4h0M93.8 651.0h0M89.0 642.8h0M89.2 644.9h0M84.7 637.7h0M86.0 651.9h0M95.4 647.7h0M88.2 649.1h0M89.1 646.1h0M90.4 651.2h0M80.7 649.5h0M87.5 635.2h0M90.9 631.1h0M84.0 648.1h0M83.0 649.1h0M92.0 644.0h0M87.4 629.2h0M91.5 634.8h0M94.4 633.6h0M81.6 644.7h0M81.0 641.6h0M83.8 645.7h0M83.9 631.2h0M82.2 638.8h0M91.7 637.5h0M89.1 631.6h0M97.5 631.6h0M85.9 643.6h0M82.8 642.6h0M92.5 632.2h0M89.1 640.6h0M92.1 638.8h0M96.5 631.6h0M94.3 649.4h0M83.8 629.7h0M90.1 635.8h0M86.7 636.2h0M84.4 640.0h0M94.0 639.7h0M97.1 646.7h0M95.8 629.7h0M87.6 648.5h0M85.0 648.6h0M96.1 634.3h0M84.7 630.4h0M82.8 644.4h0M83.0 639.9h0M88.6 636.3h0M85.4 635.9h0M87.3 631.4h0M81.2 640.6h0M109.4 645.8h0M105.7 627.1h0M110.3 646.6h0M119.5 639.3h0M128.6 651.6h0M119.5 646.1h0M121.6 635.5h0M117.2 643.2h0M106.7 648.3h0M115.9 637.4h0M116.0 642.0h0M107.6 639.9h0M105.1 647.8h0M124.1 643.8h0M113.0 637.2h0M137.0 648.7h0M132.2 638.1h0M110.4 637.6h0M131.5 648.2h0M126.8 636.3h0M104.5 646.7h0M104.9 629.5h0M106.6 641.5h0M109.4 646.1h0M126.9 645.4h0M111.8 640.7h0M121.5 641.8h0M111.8 635.5h0M134.9 636.5h0M125.5 637.2h0M111.2 635.0h0M118.2 640.5h0M132.2 640.5h0M119.7 648.0h0M119.6 637.3h0M107.8 647.1h0M118.2 647.7h0M133.8 641.6h0M123.8 631.6h0M109.6 636.7h0M108.4 640.6h0M122.6 649.4h0M115.6 649.0h0M120.2 649.7h0M115.9 641.7h0M118.7 643.9h0M134.1 641.9h0M132.2 647.5h0M116.9 646.4h0M122.4 650.0h0M117.0 644.1h0M109.1 626.0h0M134.7 648.9h0M126.8 638.6h0M133.3 648.8h0M137.2 632.5h0M135.1 643.8h0M112.9 641.1h0M123.0 645.7h0M137.0 644.6h0M122.1 636.1h0M126.8 650.3h0M107.1 640.2h0M106.9 631.6h0M107.5 632.7h0M137.1 646.8h0M117.5 648.2h0M132.7 644.1h0M111.3 636.2h0M104.6 650.8h0M106.0 646.6h0M108.9 639.9h0M125.4 646.2h0M121.6 636.5h0M113.7 645.8h0M131.2 651.1h0M116.8 644.8h0M106.4 634.3h0M110.9 631.8h0M136.9 644.5h0M127.7 645.5h0M120.0 647.0h0M118.0 651.1h0M130.3 650.7h0M113.8 636.3h0M113.2 646.3h0M106.3 636.7h0M122.2 649.7h0M128.3 648.6h0M123.1 642.5h0M123.1 640.2h0M119.9 635.1h0M130.2 640.5h0M136.4 639.4h0M116.5 650.1h0M121.4 634.8h0M106.2 633.5h0M104.9 631.8h0M126.2 649.2h0M127.7 639.3h0M113.3 648.0h0M112.7 643.4h0M109.3 635.2h0M110.7 650.1h0M111.3 632.9h0M111.8 635.8h0M121.6 648.2h0M115.6 637.4h0M123.1 640.4h0M111.9 649.5h0M132.0 649.2h0M121.8 650.3h0M107.1 650.4h0M124.7 635.9h0M117.2 645.2h0M136.8 644.7h0M136.3 638.4h0M136.8 646.5h0M120.7 643.8h0M134.7 649.2h0M130.9 648.4h0M125.2 643.1h0M110.1 633.9h0M121.6 634.8h0M131.8 648.6h0M118.2 651.6h0M135.8 644.3h0M132.3 637.9h0M119.5 635.7h0M112.3 643.9h0M133.2 639.3h0M130.9 648.7h0M117.3 643.5h0M131.7 647.9h0M115.5 646.4h0M136.0 634.2h0M119.6 633.9h0M119.8 648.4h0M116.0 639.1h0M127.8 635.6h0M125.9 643.7h0M109.1 645.4h0M111.8 649.5h0M108.6 640.8h0M129.6 637.6h0M118.4 640.6h0M135.6 638.1h0M112.3 651.2h0M133.7 638.8h0M124.8 640.5h0M111.9 651.2h0M127.2 636.6h0M109.7 640.3h0M114.7 633.9h0M125.8 650.4h0M122.8 646.1h0M123.4 648.4h0M116.6 645.5h0M109.4 649.7h0M120.9 636.4h0M113.4 646.5h0M133.3 650.2h0M127.7 645.0h0M134.5 639.4h0M137.1 651.4h0M124.1 642.7h0M104.3 651.5h0M112.6 647.4h0M113.2 650.9h0M112.2 638.5h0M158.6 647.8h0M148.0 637.4h0M171.2 651.2h0M151.1 651.0h0M144.4 648.6h0M169.8 642.3h0M157.3 646.0h0M157.8 640.4h0M142.3 644.4h0M148.5 639.2h0M163.3 647.3h0M153.4 647.8h0M150.7 638.4h0M161.4 643.9h0M159.4 649.8h0M146.1 640.2h0M150.5 649.2h0M158.6 641.5h0M155.1 636.7h0M167.6 647.7h0M152.3 641.5h0M165.5 644.4h0M164.4 641.3h0M145.0 637.9h0M168.6 641.5h0M143.9 650.7h0M150.3 643.4h0M168.7 648.2h0M159.5 642.2h0M143.8 637.4h0M138.2 638.4h0M163.0 638.8h0M139.8 651.8h0M146.1 647.8h0M151.0 649.2h0M144.2 640.9h0M162.1 637.9h0M159.4 648.0h0M161.3 651.5h0M168.4 644.2h0M165.0 642.5h0M148.8 642.0h0M146.3 639.3h0M167.7 642.0h0M149.6 642.9h0M170.8 648.6h0M142.5 638.3h0M139.8 651.9h0M171.4 645.6h0M139.3 644.2h0M140.4 635.2h0M142.0 649.1h0M166.7 646.9h0M139.1 648.5h0M168.9 644.7h0M163.1 646.2h0M171.8 651.6h0M160.4 645.8h0M156.1 640.7h0M140.2 638.3h0M196.6 641.3h0M197.7 641.0h0M188.9 647.1h0M205.6 645.9h0M175.3 643.7h0M175.2 648.4h0M194.0 649.7h0M173.7 646.1h0M198.9 649.1h0M193.2 641.6h0M199.2 645.0h0M181.1 650.2h0M199.6 649.2h0M182.8 647.1h0M191.8 649.2h0M187.9 643.0h0M190.3 647.9h0M195.8 650.1h0M198.7 640.9h0M187.1 640.8h0M203.9 641.1h0M179.2 639.9h0M82.3 560.9h0M82.7 571.0h0M91.5 569.0h0M92.9 569.6h0M86.0 581.0h0M82.3 583.7h0M82.3 585.7h0M102.5 588.4h0M95.1 593.1h0M84.2 590.4h0M89.7 595.1h0M97.9 602.4h0M102.5 617.8h0M109.8 627.8h0M142.7 634.5h0M148.2 637.2h0M164.7 635.9h0M168.3 640.6h0M177.5 649.3h0M178.1 649.7h0M177.5 648.4h0M181.9 644.6h0M183.8 645.9h0M185.7 637.7h0M186.9 644.0h0M188.8 644.0h0M191.3 640.3h0M193.8 640.9h0M192.6 647.8h0M195.7 645.9h0M197.6 650.3h0M199.5 648.4h0M200.8 645.3h0M204.5 642.8h0M206.4 647.8h0M210.2 647.2h0M215.2 649.0h0M220.0 646.2h0M225.9 650.9h0M226.8 644.9h0M230.9 651.2h0M234.0 648.4h0M245.4 648.4h0M247.6 650.3h0M274.9 647.8h0M277.0 646.8h0" stroke="#1a1a30" stroke-width="4.5" stroke-linecap="round" fill="none"/>
<rect x="70" y="557" width="1" height="101" fill="#777c82"/>
<rect x="71" y="557" width="1" height="100" fill="#a0a0a0"/>
<rect x="72" y="656" width="215" height="1" fill="#000" fill-opacity="0.15"/>
<rect x="71" y="657" width="216" height="1" fill="#4a4a4a"/>
<path d="M80.5 657v-2M117.5 657v-2M153.5 657v-2M190.5 657v-2M226.5 657v-2M263.5 657v-2M72 652.5h2M72 619.5h2M72 585.5h2" stroke="#333" stroke-width="1" fill="none"/>
<text x="80.5" y="672.5" text-anchor="middle" font-size="10.5" fill="#262626">0</text>
<text x="117.1" y="672.5" text-anchor="middle" font-size="10.5" fill="#262626">2</text>
<text x="153.7" y="672.5" text-anchor="middle" font-size="10.5" fill="#262626">4</text>
<text x="190.3" y="672.5" text-anchor="middle" font-size="10.5" fill="#262626">6</text>
<text x="226.9" y="672.5" text-anchor="middle" font-size="10.5" fill="#262626">8</text>
<text x="263.5" y="672.5" text-anchor="middle" font-size="10.5" fill="#262626">10</text>
<text x="65.5" y="656.6" text-anchor="end" font-size="10.5" fill="#262626">0</text>
<text x="65.5" y="623.15" text-anchor="end" font-size="10.5" fill="#262626">50</text>
<text x="65.5" y="589.7" text-anchor="end" font-size="10.5" fill="#262626">100</text>
<text x="179.0" y="688.5" text-anchor="middle" font-size="11.55" fill="#262626">Soot [FSN]</text>
<text transform="translate(41,607.0) rotate(-90)" text-anchor="middle" font-size="11.75" fill="#262626">NOx_rel [g/kg fuel]</text>
<!-- splitter & log -->
<rect x="1" y="743" width="913" height="5" fill="#c0c0c0"/>
<path d="M454.5 745v3M457.5 745v3M460.5 745v3" stroke="#fff"/>
<path d="M455.5 745v3M458.5 745v3M461.5 745v3" stroke="#a8a8a8"/>
<rect x="1" y="748" width="913" height="1" fill="#fff"/>
<rect x="1.5" y="749.5" width="912" height="30" fill="#fff" stroke="#828790"/>
<rect x="897" y="750" width="16" height="29" fill="#f0f0f0"/>
<path d="M901 759.2L904.5 755.5L908 759.2M901 769.8L904.5 773.5L908 769.8" fill="none" stroke="#5a5a5a" stroke-width="1.8"/>
<text x="6" y="761.7" font-size="12" fill="#000" stroke="#000" stroke-width="0.3" textLength="175" lengthAdjust="spacingAndGlyphs">17:10 Importing Sheet 'Tabelle1'</text>
<text x="6" y="776.6" font-size="12" fill="#000" stroke="#000" stroke-width="0.3" textLength="175.5" lengthAdjust="spacingAndGlyphs">17:10 Importing data: 824 x 13 ...</text>
<rect x="1" y="780" width="913" height="22" fill="#f0f0f0"/>
<path d="M910 790h2v2h-2zM906 794h2v2h-2zM910 794h2v2h-2zM902 798h2v2h-2zM906 798h2v2h-2zM910 798h2v2h-2z" fill="#b8b39e"/>
</svg>
</body></html>
